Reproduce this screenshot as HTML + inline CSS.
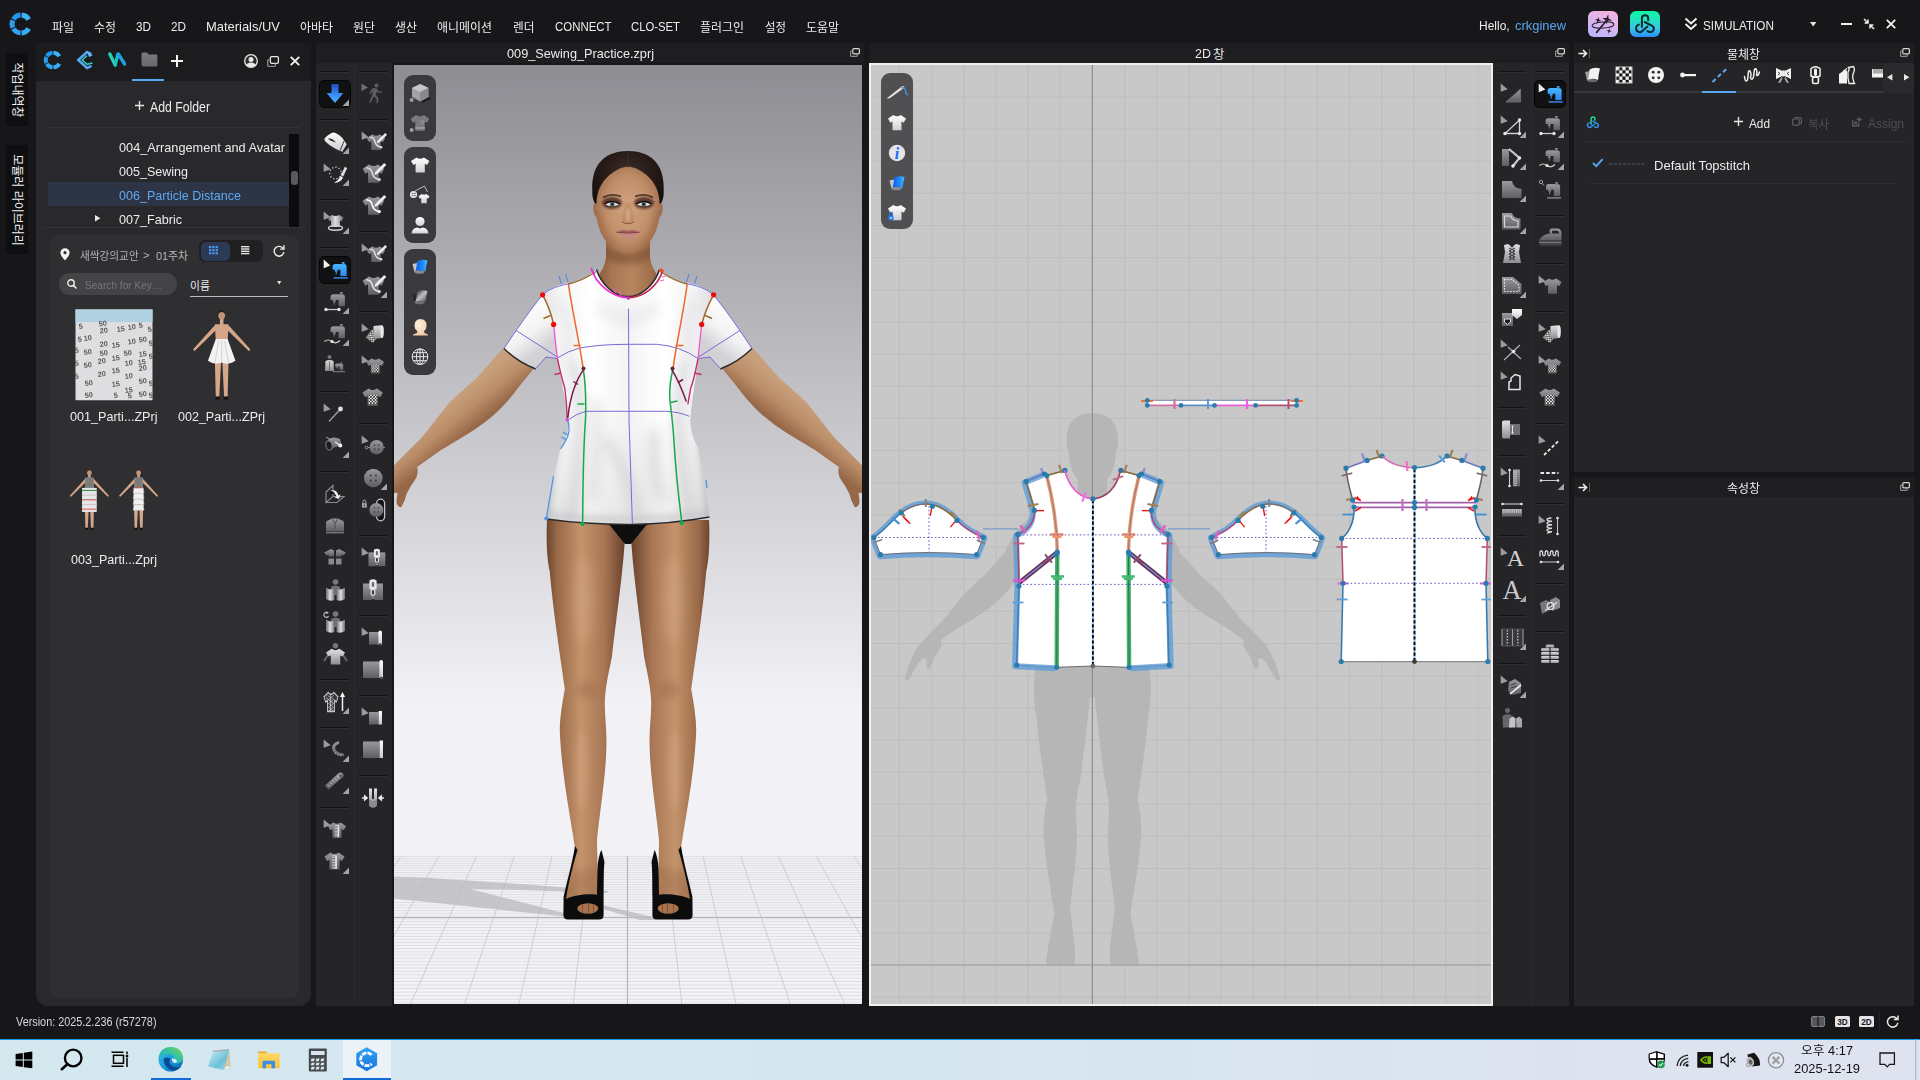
<!DOCTYPE html>
<html lang="ko">
<head>
<meta charset="utf-8">
<title>CLO - 009_Sewing_Practice.zprj</title>
<style>
*{box-sizing:border-box;margin:0;padding:0}
html,body{width:1920px;height:1080px;overflow:hidden;background:#17171a}
body{position:relative;font-family:"Liberation Sans","Noto Sans CJK KR",sans-serif;font-size:13px;color:#e4e4e6}
.abs{position:absolute}
.t{position:absolute;white-space:pre;line-height:1}
svg{position:absolute;overflow:visible}
.vtab{position:absolute;left:6px;width:22px;background:#0f0f11;border-radius:2px}
.vtab span{position:absolute;left:50%;top:50%;white-space:nowrap;transform:translate(-50%,-50%) rotate(90deg);font-size:12px;line-height:1;color:#f2f2f2}
.sep{position:absolute;height:1px;width:28px;background:#121214;box-shadow:0 1px 0 #303033}
</style>
</head>
<body>

<!-- sec_menu -->
<div class="abs" style="left:0px;top:0px;width:1920px;height:43px;background:#17171a;"></div><svg style="left:21.3px;top:24px" width="1" height="1"><path d="M7.75 -4.47A8.95 8.95 0 0 0 0.55 -8.93" fill="none" stroke="#3db4f8" stroke-width="4.90"/><path d="M-0.55 -8.93A8.95 8.95 0 0 0 -7.59 -4.74" fill="none" stroke="#2397ee" stroke-width="4.90"/><path d="M-8.11 -3.78A8.95 8.95 0 0 0 -8.11 3.78" fill="none" stroke="#2a9df0" stroke-width="4.90"/><path d="M-7.59 4.74A8.95 8.95 0 0 0 -0.55 8.93" fill="none" stroke="#2fa4f3" stroke-width="4.90"/><path d="M0.55 8.93A8.95 8.95 0 0 0 7.75 4.47" fill="none" stroke="#35aef6" stroke-width="4.90"/></svg><div class="t" style="left:52px;top:22px;font-size:12.4px;color:#ececee;transform:scaleX(0.9644);transform-origin:0 0;">파일</div><div class="t" style="left:94px;top:22px;font-size:12.4px;color:#ececee;transform:scaleX(0.9644);transform-origin:0 0;">수정</div><div class="t" style="left:136px;top:20px;font-size:13.5px;color:#ececee;transform:scaleX(0.8688);transform-origin:0 0;">3D</div><div class="t" style="left:171px;top:20px;font-size:13.5px;color:#ececee;transform:scaleX(0.8688);transform-origin:0 0;">2D</div><div class="t" style="left:206px;top:20px;font-size:13.5px;color:#ececee;transform:scaleX(0.9575);transform-origin:0 0;">Materials/UV</div><div class="t" style="left:300px;top:22px;font-size:12.4px;color:#ececee;transform:scaleX(0.9648);transform-origin:0 0;">아바타</div><div class="t" style="left:353px;top:22px;font-size:12.4px;color:#ececee;transform:scaleX(0.9644);transform-origin:0 0;">원단</div><div class="t" style="left:395px;top:22px;font-size:12.4px;color:#ececee;transform:scaleX(0.9644);transform-origin:0 0;">생산</div><div class="t" style="left:437px;top:22px;font-size:12.4px;color:#ececee;transform:scaleX(0.9649);transform-origin:0 0;">애니메이션</div><div class="t" style="left:512.5px;top:22px;font-size:12.4px;color:#ececee;transform:scaleX(0.9425);transform-origin:0 0;">렌더</div><div class="t" style="left:554.5px;top:20px;font-size:13.5px;color:#ececee;transform:scaleX(0.8464);transform-origin:0 0;">CONNECT</div><div class="t" style="left:631px;top:20px;font-size:13.5px;color:#ececee;transform:scaleX(0.8374);transform-origin:0 0;">CLO-SET</div><div class="t" style="left:700px;top:22px;font-size:12.4px;color:#ececee;transform:scaleX(0.9647);transform-origin:0 0;">플러그인</div><div class="t" style="left:764.5px;top:22px;font-size:12.4px;color:#ececee;transform:scaleX(0.9205);transform-origin:0 0;">설정</div><div class="t" style="left:806px;top:22px;font-size:12.4px;color:#ececee;transform:scaleX(0.9648);transform-origin:0 0;">도움말</div><div class="t" style="left:1479px;top:19px;font-size:13.5px;color:#ececee;transform:scaleX(0.8885);transform-origin:0 0;">Hello, </div><div class="t" style="left:1514.5px;top:19px;font-size:13.5px;color:#58a6f0;transform:scaleX(0.9572);transform-origin:0 0;">crkginew</div><div class="abs" style="left:1588px;top:10.6px;width:30.2px;height:26.4px;border-radius:6px;background:linear-gradient(200deg,#fdb2de 0%,#dcb5ec 45%,#b6b4fc 100%)"></div><svg style="left:0px;top:0px;" width="1920" height="1080" viewBox="0 0 1920 1080"><g fill="none" stroke="#2a2030" stroke-linecap="round"><ellipse cx="1603" cy="25" rx="11" ry="3.1" transform="rotate(-4 1603 25)" stroke-width="1"/><path d="M1596.600 32.400L1606.500 20.500" stroke-width="1.700"/></g><g fill="#2a2030"><path d="M1607.2 14.100000000000001L1608.34 18.16L1612.4 19.3L1608.34 20.44L1607.2 24.5L1606.06 20.44L1602.0 19.3L1606.06 18.16z" transform="rotate(12 1607.2 19.3)"/><path d="M1598 17.0L1598.80 19.40L1601.2 20.2L1598.80 21.00L1598 23.4L1597.20 21.00L1594.8 20.2L1597.20 19.40z" transform="rotate(12 1598 20.2)"/><path d="M1609 28.3L1609.67 30.32L1611.7 31L1609.67 31.68L1609 33.7L1608.33 31.68L1606.3 31L1608.33 30.32z" transform="rotate(12 1609 31)"/></g></svg><div class="abs" style="left:1630px;top:10.6px;width:29.8px;height:26.4px;border-radius:6px;background:linear-gradient(180deg,#0ff7a6 0%,#22e2c2 35%,#38c8e4 65%,#2a8cff 100%)"></div><svg style="left:0px;top:0px;" width="1920" height="1080" viewBox="0 0 1920 1080"><g fill="none" stroke="#0b2a32" stroke-width="2" stroke-linecap="round"><path d="M1641.900 27V18.400A3.150 3.150 0 0 1 1648.200 18.400V20.200"/><path d="M1644.700 22L1652.600 26.200A3.300 3.300 0 0 1 1650 32Q1648.500 32 1647.500 31"/><path d="M1638.800 24.600A3.700 3.700 0 1 0 1641 32L1647.500 26.600"/></g></svg><svg style="left:1684px;top:17px;" width="14" height="14" viewBox="0 0 14 14"><path d="M1.5 1.5L7 6.5L12.5 1.5M1.5 7L7 12L12.5 7" fill="none" stroke="#f4f4f4" stroke-width="1.9"/></svg><div class="t" style="left:1703px;top:19px;font-size:13.5px;color:#ececee;transform:scaleX(0.8710);transform-origin:0 0;">SIMULATION</div><svg style="left:1810px;top:22px;" width="7" height="5" viewBox="0 0 7 5"><path d="M0 0H6.4L3.2 4.6z" fill="#e0e0e0"/></svg><div class="abs" style="left:1841px;top:23px;width:11px;height:2px;background:#f0f0f0;"></div><svg style="left:1863px;top:18px;" width="12" height="12" viewBox="0 0 12 12"><g fill="none" stroke="#f0f0f0" stroke-width="1.5"><path d="M1 1L5 5M5 1.6V5H1.6M11 11L7 7M7 10.4V7H10.4"/></g></svg><svg style="left:1886px;top:19px;" width="10" height="10" viewBox="0 0 10 10"><path d="M0.8 0.8L9.2 9.2M9.2 0.8L0.8 9.2" fill="none" stroke="#f0f0f0" stroke-width="1.8"/></svg>
<!-- sec_lib -->
<div class="vtab" style="top:53px;height:73px"><span>작업내역창</span></div><div class="vtab" style="top:145px;height:109px"><span>모듈러 라이브러리</span></div><div class="abs" style="left:36px;top:43px;width:275px;height:963px;background:#29292c;border-radius:0 0 12px 12px"></div><div class="abs" style="left:36px;top:43px;width:275px;height:38px;background:#1c1c1f;"></div><svg style="left:53.3px;top:60px" width="1" height="1"><path d="M6.32 -3.65A7.30 7.30 0 0 0 0.45 -7.29" fill="none" stroke="#3db4f8" stroke-width="4.00"/><path d="M-0.45 -7.29A7.30 7.30 0 0 0 -6.19 -3.87" fill="none" stroke="#2397ee" stroke-width="4.00"/><path d="M-6.62 -3.09A7.30 7.30 0 0 0 -6.62 3.09" fill="none" stroke="#2a9df0" stroke-width="4.00"/><path d="M-6.19 3.87A7.30 7.30 0 0 0 -0.45 7.29" fill="none" stroke="#2fa4f3" stroke-width="4.00"/><path d="M0.45 7.29A7.30 7.30 0 0 0 6.32 3.65" fill="none" stroke="#35aef6" stroke-width="4.00"/></svg><svg style="left:76px;top:51px;" width="18" height="18" viewBox="0 0 18 18"><path d="M15.5 3.2L11 1L2.2 9L11 17L15.5 14.8" fill="none" stroke="#5aa9f2" stroke-width="2.4" stroke-linejoin="miter"/><path d="M11 4.6L6.2 9L11 13.4L16.5 12" fill="none" stroke="#35c7c2" stroke-width="1.6"/><path d="M11 1L16.8 4.4L13 6z" fill="#6db5f7"/></svg><svg style="left:108px;top:52px;" width="19" height="15" viewBox="0 0 19 15"><path d="M1.8 2L7.2 13" stroke="#24d3b4" stroke-width="3.4" stroke-linecap="round"/><path d="M7.2 13L9.8 2.5" stroke="#1fc0c0" stroke-width="3.2" stroke-linecap="round"/><path d="M10.2 2L16.6 12" stroke="#1aa0e8" stroke-width="3.4" stroke-linecap="round"/></svg><svg style="left:141px;top:52px;" width="17" height="15" viewBox="0 0 17 15"><defs><linearGradient id="fg" x1="0" y1="0" x2="0" y2="1"><stop offset="0" stop-color="#7c7c80"/><stop offset="1" stop-color="#68686c"/></linearGradient></defs><path d="M0.5 2.2Q0.5 0.6 2 0.6H6L7.6 2.4H15Q16.4 2.4 16.4 3.8V13Q16.4 14.6 15 14.6H2Q0.5 14.6 0.5 13z" fill="url(#fg)"/></svg><svg style="left:171px;top:55px;" width="12" height="12" viewBox="0 0 12 12"><path d="M6 0V12M0 6H12" stroke="#f4f4f4" stroke-width="2"/></svg><div class="abs" style="left:132px;top:78.5px;width:32px;height:2.5px;background:#58a9f2;"></div><svg style="left:244px;top:54px;" width="14" height="14" viewBox="0 0 14 14"><circle cx="7" cy="7" r="6.3" fill="#2a2a2d" stroke="#e8e8e8" stroke-width="1.3"/><circle cx="7" cy="5.6" r="2.5" fill="#e8e8e8"/><path d="M2.4 11.2Q3 8.4 7 8.4Q11 8.4 11.6 11.2Q9.6 13.2 7 13.2Q4.4 13.2 2.4 11.2z" fill="#e8e8e8"/></svg><svg style="left:267px;top:55.5px;" width="12" height="11" viewBox="0 0 12 11"><rect x="3.4" y="0.7" width="8" height="6.6" rx="1.2" fill="none" stroke="#e8e8e8" stroke-width="1.3"/><path d="M3.4 3.6H1.8Q0.7 3.6 0.7 4.8V9.2Q0.7 10.4 1.8 10.4H7.2Q8.4 10.4 8.4 9.2V7.4" fill="none" stroke="#8a8a8e" stroke-width="1.3"/></svg><svg style="left:290px;top:56px;" width="10" height="10" viewBox="0 0 10 10"><path d="M0.8 0.8L9.2 9.2M9.2 0.8L0.8 9.2" fill="none" stroke="#f0f0f0" stroke-width="1.9"/></svg><svg style="left:135px;top:101px;" width="9" height="9" viewBox="0 0 9 9"><path d="M4.5 0V9M0 4.5H9" stroke="#e8e8e8" stroke-width="1.4"/></svg><div class="t" style="left:150px;top:100px;font-size:14px;color:#ececee;transform:scaleX(0.8761);transform-origin:0 0;">Add Folder</div><div class="abs" style="left:48px;top:127px;width:251px;height:1px;background:#343437;"></div><div class="abs" style="left:48px;top:182px;width:241px;height:24px;background:#2c3446;"></div><div class="t" style="left:118.5px;top:141px;font-size:13.5px;color:#ececee;transform:scaleX(0.9424);transform-origin:0 0;">004_Arrangement and Avatar</div><div class="t" style="left:118.5px;top:165px;font-size:13.5px;color:#ececee;transform:scaleX(0.9285);transform-origin:0 0;">005_Sewing</div><div class="t" style="left:118.5px;top:189px;font-size:13.5px;color:#5ea8f0;transform:scaleX(0.9290);transform-origin:0 0;">006_Particle Distance</div><div class="t" style="left:118.5px;top:213px;font-size:13.5px;color:#ececee;transform:scaleX(0.9327);transform-origin:0 0;">007_Fabric</div><svg style="left:95px;top:215px;" width="6" height="7" viewBox="0 0 6 7"><path d="M0 0L5.4 3.3L0 6.6z" fill="#e8e8e8"/></svg><div class="abs" style="left:289px;top:134px;width:10px;height:93px;background:#0c0c0e;"></div><div class="abs" style="left:291px;top:170.5px;width:6.6px;height:14px;background:#5a5a5e;border-radius:3px"></div><div class="abs" style="left:42px;top:227px;width:263px;height:1px;background:#333336;"></div><div class="abs" style="left:48.5px;top:234.5px;width:250.5px;height:763.5px;background:#2f2f32;border-radius:9px"></div><svg style="left:60px;top:248px;" width="10" height="12.5" viewBox="0 0 10 12.5"><path d="M5 0.2A4.6 4.6 0 0 1 9.6 4.8C9.6 8 5 12.3 5 12.3C5 12.3 0.4 8 0.4 4.8A4.6 4.6 0 0 1 5 0.2z" fill="#f2f2f2"/><circle cx="5" cy="4.7" r="1.6" fill="#2f2f32"/></svg><div class="t" style="left:79.6px;top:251px;font-size:10.8px;color:#b4b4b8;transform:scaleX(0.9847);transform-origin:0 0;">새싹강의교안</div><div class="t" style="left:143px;top:250px;font-size:11px;color:#b4b4b8;">&gt;</div><div class="t" style="left:156px;top:251px;font-size:10.8px;color:#b4b4b8;">01주차</div><div class="abs" style="left:199px;top:240px;width:64px;height:22px;background:#202023;border-radius:6px"></div><div class="abs" style="left:200.5px;top:241.5px;width:29px;height:19px;background:#2c3a56;border-radius:5px"></div><svg style="left:209px;top:246px;" width="9" height="9" viewBox="0 0 9 9"><rect x="0.0" y="0.0" width="2.3" height="2.1" fill="#4f9af0"/><rect x="0.0" y="3.1" width="2.3" height="2.1" fill="#4f9af0"/><rect x="0.0" y="6.2" width="2.3" height="2.1" fill="#4f9af0"/><rect x="3.3" y="0.0" width="2.3" height="2.1" fill="#4f9af0"/><rect x="3.3" y="3.1" width="2.3" height="2.1" fill="#4f9af0"/><rect x="3.3" y="6.2" width="2.3" height="2.1" fill="#4f9af0"/><rect x="6.6" y="0.0" width="2.3" height="2.1" fill="#4f9af0"/><rect x="6.6" y="3.1" width="2.3" height="2.1" fill="#4f9af0"/><rect x="6.6" y="6.2" width="2.3" height="2.1" fill="#4f9af0"/></svg><svg style="left:241px;top:246px;" width="9" height="9" viewBox="0 0 9 9"><rect x="0" y="0.0" width="8.4" height="1.4" fill="#e6e6e6"/><rect x="0" y="2.3" width="8.4" height="1.4" fill="#e6e6e6"/><rect x="0" y="4.6" width="8.4" height="1.4" fill="#e6e6e6"/><rect x="0" y="6.8999999999999995" width="8.4" height="1.4" fill="#e6e6e6"/></svg><svg style="left:273px;top:245px;" width="12" height="12" viewBox="0 0 12 12"><path d="M10.2 3.6A4.9 4.9 0 1 0 10.9 7.2" fill="none" stroke="#f0f0f0" stroke-width="1.4"/><path d="M7.2 4.1H11V0.3" fill="none" stroke="#f0f0f0" stroke-width="1.4"/></svg><div class="abs" style="left:59px;top:273px;width:118px;height:22px;background:#444447;border-radius:11px"></div><svg style="left:67px;top:279px;" width="10" height="10" viewBox="0 0 10 10"><circle cx="4" cy="4" r="3.2" fill="none" stroke="#f0f0f0" stroke-width="1.4"/><path d="M6.4 6.4L9 9" stroke="#f0f0f0" stroke-width="1.6" stroke-linecap="round"/></svg><div class="t" style="left:84.6px;top:280px;font-size:11px;color:#77777b;transform:scaleX(0.9192);transform-origin:0 0;">Search for Key…</div><div class="t" style="left:190px;top:281px;font-size:10.8px;color:#ececee;">이름</div><svg style="left:277px;top:281.3px;" width="5" height="4" viewBox="0 0 5 4"><path d="M0 0H4.4L2.2 3.4z" fill="#e0e0e0"/></svg><div class="abs" style="left:190px;top:296px;width:98px;height:1px;background:#bcbcc0;"></div><svg style="left:0;top:0" width="1920" height="1080"><defs><filter id="ntb"><feGaussianBlur stdDeviation="0.35"/></filter><clipPath id="nt"><rect x="75.3" y="309.3" width="77.4" height="91.2"/></clipPath></defs><g clip-path="url(#nt)"><rect x="75.3" y="309.3" width="77.4" height="91.2" fill="#dedee0"/><rect x="75.3" y="309.3" width="77.4" height="12.8" fill="#b0d2e0"/><g font-family="'Liberation Sans',sans-serif" font-size="7.4" font-weight="700" fill="#3c3c3e" opacity="0.82" filter="url(#ntb)"><text x="79" y="329" transform="rotate(-7 79 329)">5</text><text x="99" y="326.5" transform="rotate(-7 99 326.5)">50</text><text x="100" y="333.5" transform="rotate(-7 100 333.5)">20</text><text x="117" y="332" transform="rotate(-7 117 332)">15</text><text x="128" y="330" transform="rotate(-7 128 330)">10</text><text x="139" y="328" transform="rotate(-7 139 328)">5</text><text x="148" y="332" transform="rotate(-7 148 332)">5</text><text x="78" y="342" transform="rotate(-7 78 342)">5</text><text x="84" y="341" transform="rotate(-7 84 341)">10</text><text x="100" y="347" transform="rotate(-7 100 347)">20</text><text x="112" y="348" transform="rotate(-7 112 348)">15</text><text x="128" y="344.5" transform="rotate(-7 128 344.5)">10</text><text x="139" y="342.5" transform="rotate(-7 139 342.5)">50</text><text x="149" y="346" transform="rotate(-7 149 346)">5</text><text x="75" y="353" transform="rotate(-7 75 353)">5</text><text x="84" y="355" transform="rotate(-7 84 355)">50</text><text x="100" y="356" transform="rotate(-7 100 356)">50</text><text x="112" y="361" transform="rotate(-7 112 361)">15</text><text x="124" y="356" transform="rotate(-7 124 356)">50</text><text x="139" y="357" transform="rotate(-7 139 357)">15</text><text x="149" y="359" transform="rotate(-7 149 359)">5</text><text x="75" y="366" transform="rotate(-7 75 366)">5</text><text x="84" y="368" transform="rotate(-7 84 368)">50</text><text x="98" y="364" transform="rotate(-7 98 364)">20</text><text x="125" y="366" transform="rotate(-7 125 366)">10</text><text x="138" y="365" transform="rotate(-7 138 365)">15</text><text x="139" y="371" transform="rotate(-7 139 371)">20</text><text x="98" y="377" transform="rotate(-7 98 377)">20</text><text x="112" y="373.5" transform="rotate(-7 112 373.5)">15</text><text x="125" y="379" transform="rotate(-7 125 379)">10</text><text x="75" y="379" transform="rotate(-7 75 379)">5</text><text x="85" y="386" transform="rotate(-7 85 386)">50</text><text x="112" y="387" transform="rotate(-7 112 387)">15</text><text x="139" y="384" transform="rotate(-7 139 384)">50</text><text x="149" y="386" transform="rotate(-7 149 386)">5</text><text x="85" y="398" transform="rotate(-7 85 398)">50</text><text x="114" y="398" transform="rotate(-7 114 398)">5</text><text x="125" y="393" transform="rotate(-7 125 393)">15</text><text x="128" y="398.5" transform="rotate(-7 128 398.5)">5</text><text x="139" y="397" transform="rotate(-7 139 397)">50</text><text x="149" y="398" transform="rotate(-7 149 398)">5</text></g></g></svg><svg style="left:0px;top:0px;" width="1920" height="1080" viewBox="0 0 1920 1080"><g transform="translate(221.7 309.5) scale(0.9836956521739131)"><path d="M-7 16L-29 40.5L-27.8 42.5L-5.5 20.5z" fill="#d6a688"/><path d="M7 16L29 40.5L27.8 42.5L5.5 20.5z" fill="#d6a688"/><path d="M-7 50L-6 90L-2.5 90L-0.5 50z" fill="#d6a688"/><path d="M7 50L6 90L2.5 90L0.5 50z" fill="#d6a688"/><path d="M-6.5 88.5h4.5v3h-4.5zM2 88.5h4.5v3H2z" fill="#111"/><path d="M-7 15L7 15L6 32L7 50L-7 50L-6 32z" fill="#d6a688"/><rect x="-1.8" y="9" width="3.6" height="7" fill="#d6a688"/><ellipse cx="0" cy="5.500" rx="3.500" ry="5" fill="#c39478"/><path d="M-3.700 5.500Q-4 0.300 0 0.300Q4 0.300 3.700 5.500Q3 2.800 0 2.600Q-3 2.800 -3.700 5.500z" fill="#2a1d18"/><path d="M-6 30L6 30L14 52Q7 57 0 54Q-7 57 -14 52z" fill="#f2f2f2"/><path d="M-3 32L-7 54M3 32L7 54M0 32V54" stroke="#d2d2d2" stroke-width="1" fill="none"/></g><g transform="translate(89.4 468.5) scale(0.6684782608695652)"><path d="M-7 16L-29 40.5L-27.8 42.5L-5.5 20.5z" fill="#d6a688"/><path d="M7 16L29 40.5L27.8 42.5L5.5 20.5z" fill="#d6a688"/><path d="M-7 50L-6 90L-2.5 90L-0.5 50z" fill="#d6a688"/><path d="M7 50L6 90L2.5 90L0.5 50z" fill="#d6a688"/><path d="M-6.5 88.5h4.5v3h-4.5zM2 88.5h4.5v3H2z" fill="#111"/><path d="M-7 15L7 15L6 32L7 50L-7 50L-6 32z" fill="#d6a688"/><rect x="-1.8" y="9" width="3.6" height="7" fill="#d6a688"/><ellipse cx="0" cy="5.500" rx="3.500" ry="5" fill="#c39478"/><path d="M-3.700 5.500Q-4 0.300 0 0.300Q4 0.300 3.700 5.500Q3 2.800 0 2.600Q-3 2.800 -3.700 5.500z" fill="#2a1d18"/><path d="M-6 13L6 13L6.5 30L-6.5 30z" fill="#7b7b7b"/><rect x="-11" y="29" width="22" height="36" fill="#e6e6e6"/><rect x="-11" y="32" width="22" height="1.6" fill="#3a8a4a"/><rect x="-11" y="39" width="22" height="1.6" fill="#c9c9c9"/><rect x="-11" y="46" width="22" height="1.6" fill="#c05a5a"/><rect x="-11" y="53" width="22" height="1.6" fill="#c9c9c9"/><rect x="-11" y="60" width="22" height="1.6" fill="#e05a5a"/></g><g transform="translate(138.6 468.5) scale(0.6684782608695652)"><path d="M-7 16L-29 40.5L-27.8 42.5L-5.5 20.5z" fill="#d6a688"/><path d="M7 16L29 40.5L27.8 42.5L5.5 20.5z" fill="#d6a688"/><path d="M-7 50L-6 90L-2.5 90L-0.5 50z" fill="#d6a688"/><path d="M7 50L6 90L2.5 90L0.5 50z" fill="#d6a688"/><path d="M-6.5 88.5h4.5v3h-4.5zM2 88.5h4.5v3H2z" fill="#111"/><path d="M-7 15L7 15L6 32L7 50L-7 50L-6 32z" fill="#d6a688"/><rect x="-1.8" y="9" width="3.6" height="7" fill="#d6a688"/><ellipse cx="0" cy="5.500" rx="3.500" ry="5" fill="#c39478"/><path d="M-3.700 5.500Q-4 0.300 0 0.300Q4 0.300 3.700 5.500Q3 2.800 0 2.600Q-3 2.800 -3.700 5.500z" fill="#2a1d18"/><path d="M-6 13L6 13L6.5 30L-6.5 30z" fill="#7b7b7b"/><path d="M-7 29.0L7 29.0L8 37.0L-8 37.0z" fill="#f0f0f0" stroke="#c8c8c8" stroke-width="0.8"/><path d="M-7 37.5L7 37.5L8 45.5L-8 45.5z" fill="#f0f0f0" stroke="#c8c8c8" stroke-width="0.8"/><path d="M-7 46.0L7 46.0L8 54.0L-8 54.0z" fill="#f0f0f0" stroke="#c8c8c8" stroke-width="0.8"/><path d="M-7 54.5L7 54.5L8 62.5L-8 62.5z" fill="#f0f0f0" stroke="#c8c8c8" stroke-width="0.8"/><rect x="-6" y="28" width="12" height="1.5" fill="#c05050"/></g></svg><div class="t" style="left:70px;top:410px;font-size:13.5px;color:#ececee;transform:scaleX(0.9329);transform-origin:0 0;">001_Parti...ZPrj</div><div class="t" style="left:178px;top:410px;font-size:13.5px;color:#ececee;transform:scaleX(0.9275);transform-origin:0 0;">002_Parti...ZPrj</div><div class="t" style="left:71px;top:553px;font-size:13.5px;color:#ececee;transform:scaleX(0.9318);transform-origin:0 0;">003_Parti...Zprj</div>
<!-- sec_3d -->
<div class="abs" style="left:316px;top:43px;width:548px;height:20px;background:#1e1e21;"></div><div class="t" style="left:507px;top:47px;font-size:13.5px;color:#ececee;transform:scaleX(0.9417);transform-origin:0 0;">009_Sewing_Practice.zprj</div><svg style="left:850px;top:48px;" width="10" height="9" viewBox="0 0 10 9"><rect x="2.8" y="0.6" width="6.6" height="5.2" rx="1" fill="none" stroke="#d8d8d8" stroke-width="1.2"/><path d="M2.8 2.8H1.6Q0.6 2.8 0.6 3.8V7.4Q0.6 8.4 1.6 8.4H6.2Q7.2 8.4 7.2 7.4V5.8" fill="none" stroke="#8c8c90" stroke-width="1.2"/></svg><div class="abs" style="left:316px;top:63px;width:38px;height:943px;background:#252528;"></div><div class="abs" style="left:354px;top:63px;width:38px;height:943px;background:#252528;border-left:1px solid #2b2b2e"></div><div class="abs" style="left:392px;top:63px;width:472px;height:943px;background:#17171a;"></div><div class="abs" style="left:394px;top:65px;width:468px;height:939px;background:linear-gradient(to bottom,#8d8d93 0,#f2f2f6 68%,#f3f3f7 100%)"></div><svg style="left:0px;top:0px;" width="1920" height="1080" viewBox="0 0 1920 1080"><defs><clipPath id="vp3"><rect x="394" y="65" width="468" height="939"/></clipPath></defs><g clip-path="url(#vp3)"><rect x="394" y="856.6" width="468" height="147.39999999999998" fill="#f3f3f7"/><path d="M394 856.6H862M394 858.8H862M394 861.0H862M394 863.3H862M394 865.5H862M394 867.8H862M394 870.1H862M394 872.5H862M394 874.8H862M394 877.2H862M394 879.6H862M394 882.1H862M394 884.5H862M394 887.0H862M394 889.5H862M394 892.1H862M394 894.6H862M394 897.2H862M394 899.8H862M394 902.5H862M394 905.1H862M394 907.8H862M394 910.6H862M394 913.3H862M394 916.1H862M394 918.9H862M394 921.7H862M394 924.6H862M394 927.5H862M394 930.4H862M394 933.4H862M394 936.4H862M394 939.4H862M394 942.4H862M394 945.5H862M394 948.6H862M394 951.8H862M394 954.9H862M394 958.1H862M394 961.4H862M394 964.7H862M394 968.0H862M394 971.3H862M394 974.7H862M394 978.1H862M394 981.5H862M394 985.0H862M394 988.5H862M394 992.1H862M394 995.6H862M394 999.3H862M394 1002.9H862" stroke="#dedee2" stroke-width="1" fill="none"/><path d="M98.3 856.6L-132.4 1004M136.1 856.6L-78.1 1004M173.9 856.6L-23.8 1004M211.7 856.6L30.4 1004M249.5 856.6L84.7 1004M287.3 856.6L139.0 1004M325.1 856.6L193.3 1004M362.9 856.6L247.5 1004M400.7 856.6L301.8 1004M438.5 856.6L356.1 1004M476.3 856.6L410.4 1004M514.1 856.6L464.7 1004M551.9 856.6L518.9 1004M589.7 856.6L573.2 1004M665.3 856.6L681.8 1004M703.1 856.6L736.1 1004M740.9 856.6L790.3 1004M778.7 856.6L844.6 1004M816.5 856.6L898.9 1004M854.3 856.6L953.2 1004M892.1 856.6L1007.5 1004M929.9 856.6L1061.7 1004M967.7 856.6L1116.0 1004M1005.5 856.6L1170.3 1004M1043.3 856.6L1224.6 1004M1081.1 856.6L1278.8 1004M1118.9 856.6L1333.1 1004M1156.7 856.6L1387.4 1004" stroke="#cdcdd2" stroke-width="1" fill="none"/><path d="M627.5 856.6V1004M394 917.5H862" stroke="#b4b4b8" stroke-width="1.2" fill="none"/><path d="M394 876.5L430 878L520 884L609 891L607 893L520 890L470 889L564 913L566 916.5L530 913L394 898.5z" fill="#b9b9bd" opacity="0.75"/><path d="M604 905.5L655 917.5L657 920L640 920L603 909z" fill="#b9b9bd" opacity="0.75"/><defs><linearGradient id="legL" x1="0" y1="0" x2="1" y2="0"><stop offset="0" stop-color="#6e452e"/><stop offset="0.14" stop-color="#9a6a48"/><stop offset="0.44" stop-color="#c3936c"/><stop offset="0.74" stop-color="#a87654"/><stop offset="1" stop-color="#6a422c"/></linearGradient>
<linearGradient id="armL" gradientUnits="userSpaceOnUse" x1="448" y1="404" x2="470" y2="431"><stop offset="0" stop-color="#c89f7b"/><stop offset="0.5" stop-color="#bb8d69"/><stop offset="1" stop-color="#966848"/></linearGradient>
<linearGradient id="neck" x1="0" y1="0" x2="1" y2="0"><stop offset="0" stop-color="#74482e"/><stop offset="0.3" stop-color="#a87652"/><stop offset="0.55" stop-color="#b7855f"/><stop offset="0.8" stop-color="#a06e4b"/><stop offset="1" stop-color="#70442c"/></linearGradient>
<radialGradient id="face" cx="0.5" cy="0.52" r="0.62"><stop offset="0" stop-color="#d2a480"/><stop offset="0.55" stop-color="#c08f6a"/><stop offset="0.85" stop-color="#a06d4c"/><stop offset="1" stop-color="#83553a"/></radialGradient>
<radialGradient id="hair" cx="0.5" cy="0.35" r="0.7"><stop offset="0" stop-color="#3a2a25"/><stop offset="0.6" stop-color="#231815"/><stop offset="1" stop-color="#15100e"/></radialGradient>
<linearGradient id="shirt" x1="0" y1="0" x2="1" y2="0"><stop offset="0" stop-color="#e3e3e5"/><stop offset="0.1" stop-color="#f6f6f7"/><stop offset="0.28" stop-color="#ffffff"/><stop offset="0.5" stop-color="#f4f4f5"/><stop offset="0.72" stop-color="#ffffff"/><stop offset="0.9" stop-color="#f2f2f3"/><stop offset="1" stop-color="#dcdcdf"/></linearGradient>
<linearGradient id="shirtV" x1="0" y1="0" x2="0" y2="1"><stop offset="0" stop-color="#000" stop-opacity="0"/><stop offset="0.55" stop-color="#000" stop-opacity="0"/><stop offset="1" stop-color="#000" stop-opacity="0.07"/></linearGradient>
<linearGradient id="slv" gradientUnits="userSpaceOnUse" x1="520" y1="305" x2="548" y2="345"><stop offset="0" stop-color="#ffffff"/><stop offset="0.6" stop-color="#f3f3f4"/><stop offset="1" stop-color="#d2d2d6"/></linearGradient>
<filter id="bl1" filterUnits="userSpaceOnUse" x="380" y="60" width="500" height="960"><feGaussianBlur stdDeviation="1.2"/></filter><filter id="bl3" filterUnits="userSpaceOnUse" x="380" y="60" width="500" height="960"><feGaussianBlur stdDeviation="3"/></filter><filter id="bl6" filterUnits="userSpaceOnUse" x="380" y="60" width="500" height="960"><feGaussianBlur stdDeviation="6"/></filter></defs><g><path d="M506 345 L477.3 377.2 Q463 390 449.6 402.2 L421.8 437.4 Q410 449 399.6 459.6 L386 474 Q376 490 370 508 L366.5 521 Q368 525 371.5 523.5 L380 508 Q386 498 391 492.5 L397.7 493 Q396 500 396.8 504 Q399 508.5 401.4 506.9 Q405 501 407 493 Q411 485 416.2 478 Q418.5 472 417.1 467 L440.3 450.4 L468 433.7 Q484 424 497.7 411.5 Q511 398 519.9 385.6 L535 367 z" fill="url(#armL)"/></g><g transform="translate(1256 0) scale(-1 1)"><path d="M506 345 L477.3 377.2 Q463 390 449.6 402.2 L421.8 437.4 Q410 449 399.6 459.6 L386 474 Q376 490 370 508 L366.5 521 Q368 525 371.5 523.5 L380 508 Q386 498 391 492.5 L397.7 493 Q396 500 396.8 504 Q399 508.5 401.4 506.9 Q405 501 407 493 Q411 485 416.2 478 Q418.5 472 417.1 467 L440.3 450.4 L468 433.7 Q484 424 497.7 411.5 Q511 398 519.9 385.6 L535 367 z" fill="url(#armL)"/></g><g><path d="M547 520 C546 540 547 560 549.7 571 C553 610 560 655 564.8 689 C562 705 559 722 560 736 C562 775 570 815 575 848 C572 866 568 884 565 900 L599 897 L597.5 868 L597 840 C600 810 606 775 606.4 745.7 C607 728 604 712 605 698 C606 682 610 668 612 656 C616 620 622 580 624.5 545 L624 520 z" fill="url(#legL)"/><ellipse cx="587" cy="690" rx="11" ry="9" fill="#8f5c3c" opacity="0.28" filter="url(#bl3)"/><ellipse cx="584" cy="600" rx="9" ry="45" fill="#e0b48e" opacity="0.35" filter="url(#bl6)"/><ellipse cx="582" cy="770" rx="6" ry="40" fill="#e0b48e" opacity="0.3" filter="url(#bl3)"/><path d="M571 872 L598 868 L598.5 896 L566 899z" fill="#8a5a3c" opacity="0.25" filter="url(#bl3)"/><path d="M575 846 C572 865 566 885 563.6 897 L563.4 915 Q563.6 919.5 568 919.5 L599 919.5 Q603.6 919.5 603.6 915 L603.6 897 C603.8 885 603.5 870 604.5 862 L601.5 850 C600 852 598 860 597.5 868 L597 894.8 C588 893.5 574 895 566 899 C569 880 574 862 577.5 850 z" fill="#0c0c0c"/><ellipse cx="587.8" cy="908.5" rx="10.5" ry="5.2" fill="#a8724c"/><path d="M582.5 904.5v8.5M588.5 904v9M593.5 905v7.5" stroke="#7d4f33" stroke-width="0.9"/></g><g transform="translate(1256 0) scale(-1 1)"><path d="M547 520 C546 540 547 560 549.7 571 C553 610 560 655 564.8 689 C562 705 559 722 560 736 C562 775 570 815 575 848 C572 866 568 884 565 900 L599 897 L597.5 868 L597 840 C600 810 606 775 606.4 745.7 C607 728 604 712 605 698 C606 682 610 668 612 656 C616 620 622 580 624.5 545 L624 520 z" fill="url(#legL)"/><ellipse cx="587" cy="690" rx="11" ry="9" fill="#8f5c3c" opacity="0.28" filter="url(#bl3)"/><ellipse cx="584" cy="600" rx="9" ry="45" fill="#e0b48e" opacity="0.35" filter="url(#bl6)"/><ellipse cx="582" cy="770" rx="6" ry="40" fill="#e0b48e" opacity="0.3" filter="url(#bl3)"/><path d="M571 872 L598 868 L598.5 896 L566 899z" fill="#8a5a3c" opacity="0.25" filter="url(#bl3)"/><path d="M575 846 C572 865 566 885 563.6 897 L563.4 915 Q563.6 919.5 568 919.5 L599 919.5 Q603.6 919.5 603.6 915 L603.6 897 C603.8 885 603.5 870 604.5 862 L601.5 850 C600 852 598 860 597.5 868 L597 894.8 C588 893.5 574 895 566 899 C569 880 574 862 577.5 850 z" fill="#0c0c0c"/><ellipse cx="587.8" cy="908.5" rx="10.5" ry="5.2" fill="#a8724c"/><path d="M582.5 904.5v8.5M588.5 904v9M593.5 905v7.5" stroke="#7d4f33" stroke-width="0.9"/></g><path d="M600 518 L656 518 L645.5 526 Q636 538 631 544 L625 544 Q620 538 610.5 526z" fill="#0e0e0e"/><clipPath id="nclip"><path d="M606 240 L606 258 Q604 270 596 278 L588 285 L628 306 L668 285 L660 278 Q652 270 650 258 L650 240z"/></clipPath><path d="M606 240 L606 258 Q604 270 596 278 L588 285 L628 306 L668 285 L660 278 Q652 270 650 258 L650 240z" fill="url(#neck)"/><g clip-path="url(#nclip)"><path d="M600 243 Q628 262 656 243 L656 256 Q628 272 600 256z" fill="#6e4229" opacity="0.5" filter="url(#bl3)"/></g><clipPath id="hclip"><path d="M595 200 C595 215 598 228 603 237 C608 245 616 251 628 253.5 C640 251 648 245 653 237 C658 228 661 215 661 200 C661 172 645 160 628 160 C611 160 595 172 595 200z"/></clipPath><path d="M595 200 C595 215 598 228 603 237 C608 245 616 251 628 253.5 C640 251 648 245 653 237 C658 228 661 215 661 200 C661 172 645 160 628 160 C611 160 595 172 595 200z" fill="url(#face)"/><path d="M595 203q-2.5 2-1.5 8q1 5 3 7zM661 203q2.5 2 1.5 8q-1 5-3 7z" fill="#a06c4a"/><g clip-path="url(#hclip)"><ellipse cx="612" cy="203" rx="10" ry="6" fill="#3a1f1a" opacity="0.75" filter="url(#bl1)"/><ellipse cx="644" cy="203" rx="10" ry="6" fill="#3a1f1a" opacity="0.75" filter="url(#bl1)"/><path d="M605.5 204.5Q612 200.5 619 204.5Q612 207.5 605.5 204.5z" fill="#e8e6e2"/><path d="M637 204.5Q644 200.5 650.5 204.5Q644 207.5 637 204.5z" fill="#e8e6e2"/><circle cx="612.3" cy="204.3" r="2.3" fill="#3f6470"/><circle cx="643.7" cy="204.3" r="2.3" fill="#3f6470"/><circle cx="612.3" cy="204.3" r="1" fill="#111"/><circle cx="643.7" cy="204.3" r="1" fill="#111"/><path d="M604.5 203.8Q612 199 620 204" stroke="#1c120e" stroke-width="1.3" fill="none"/><path d="M636 204Q644 199 651.5 203.8" stroke="#1c120e" stroke-width="1.3" fill="none"/><path d="M603 197.5Q611 193 621 196.5" stroke="#3a241b" stroke-width="1.8" fill="none" opacity="0.85"/><path d="M635 196.5Q645 193 653 197.5" stroke="#3a241b" stroke-width="1.8" fill="none" opacity="0.85"/><path d="M625 203 Q623.5 214 621.5 219.5 Q622.5 223 628 223.5 Q633.5 223 634.5 219.5 Q632.5 214 631 203" fill="#b07b56" opacity="0.45" filter="url(#bl1)"/><path d="M622 221.5Q624.5 224 628 223.6Q631.5 224 634 221.5" stroke="#7a4a32" stroke-width="1" fill="none" opacity="0.8"/><ellipse cx="628" cy="215" rx="2.2" ry="7" fill="#e4b892" opacity="0.6" filter="url(#bl1)"/><path d="M616.5 232.3Q622 229.3 626 230.3Q628 231 630 230.3Q634 229.3 639.5 232.3Q634 233.2 628 233.2Q622 233.2 616.5 232.3z" fill="#a86060"/><path d="M616.5 232.3Q628 233.6 639.5 232.3Q634 238.2 628 238.2Q622 238.2 616.5 232.3z" fill="#c98888"/><path d="M616.5 232.3Q628 234 639.5 232.3" stroke="#6e3434" stroke-width="0.8" fill="none"/><path d="M598 212Q600 232 612 246" stroke="#8a5a3c" stroke-width="5" fill="none" opacity="0.35" filter="url(#bl3)"/><path d="M658 212Q656 232 644 246" stroke="#8a5a3c" stroke-width="5" fill="none" opacity="0.35" filter="url(#bl3)"/></g><path d="M592.3 190 C591.5 170 600 151 628 151 C656 151 664.500 170 663.700 190 C664 196 663 200 661 203.500 L659.500 203.500 C659.500 192 655 182 646 174.500 C639 169 633 166.700 628 166.700 C623 166.700 617 169 610 174.500 C601 182 596.500 192 596.500 203.500 L595 203.500 C593 200 592 196 592.300 190z" fill="url(#hair)"/><path d="M628 151.5V168" stroke="#4a3a34" stroke-width="0.8" opacity="0.8"/><g><path d="M568 283 C558 284.5 549 289 542.6 294.8 C530 310 515 332 504 348.5 C512 356 524 364 535.8 368.5 L546 357 L557.4 358.5 L575 330z" fill="url(#slv)"/><path d="M504 348.5 C512 356.5 524 364.5 535.8 369" stroke="#2a2a2c" stroke-width="1.4" fill="none"/></g><g transform="translate(1256 0) scale(-1 1)"><path d="M568 283 C558 284.5 549 289 542.6 294.8 C530 310 515 332 504 348.5 C512 356 524 364 535.8 368.5 L546 357 L557.4 358.5 L575 330z" fill="url(#slv)"/><path d="M504 348.5 C512 356.5 524 364.5 535.8 369" stroke="#2a2a2c" stroke-width="1.4" fill="none"/></g><path d="M596.5 269.6 C590 275 580 281 568 284 C556 286 548 290 542.6 294.8 C548 305 552 316 553.6 324.4 C555 337 556 349 557.4 358.5 C561 380 566 400 567.8 418 C570 430 566 440 560.4 449 C554 472 549 498 546 519 C575 523 600 524.5 630 524.4 C660 524 688 521 709.4 517 C707 495 702 470 698.5 449 C693 438 689 428 690.7 415 C692 398 696 378 698.6 358.5 C700 349 701 337 702.4 324.4 C704 316 708 305 713.4 294.8 C708 290 700 286 688 284 C676 281 666 275 659.5 269.6 C655 284 642 297.8 628 297.8 C614 297.8 601 284 596.5 269.6z" fill="url(#shirt)"/><path d="M596.5 269.6 C590 275 580 281 568 284 C556 286 548 290 542.6 294.8 C548 305 552 316 553.6 324.4 C555 337 556 349 557.4 358.5 C561 380 566 400 567.8 418 C570 430 566 440 560.4 449 C554 472 549 498 546 519 C575 523 600 524.5 630 524.4 C660 524 688 521 709.4 517 C707 495 702 470 698.5 449 C693 438 689 428 690.7 415 C692 398 696 378 698.6 358.5 C700 349 701 337 702.4 324.4 C704 316 708 305 713.4 294.8 C708 290 700 286 688 284 C676 281 666 275 659.5 269.6 C655 284 642 297.8 628 297.8 C614 297.8 601 284 596.5 269.6z" fill="url(#shirtV)"/><clipPath id="bclip"><path d="M596.5 269.6 C590 275 580 281 568 284 C556 286 548 290 542.6 294.8 C548 305 552 316 553.6 324.4 C555 337 556 349 557.4 358.5 C561 380 566 400 567.8 418 C570 430 566 440 560.4 449 C554 472 549 498 546 519 C575 523 600 524.5 630 524.4 C660 524 688 521 709.4 517 C707 495 702 470 698.5 449 C693 438 689 428 690.7 415 C692 398 696 378 698.6 358.5 C700 349 701 337 702.4 324.4 C704 316 708 305 713.4 294.8 C708 290 700 286 688 284 C676 281 666 275 659.5 269.6 C655 284 642 297.8 628 297.8 C614 297.8 601 284 596.5 269.6z"/></clipPath><g clip-path="url(#bclip)"><path d="M572 360Q590 420 570 520" stroke="#bcbcc2" stroke-width="9" fill="none" opacity="0.55" filter="url(#bl6)"/><path d="M686 360Q668 420 692 520" stroke="#bcbcc2" stroke-width="9" fill="none" opacity="0.5" filter="url(#bl6)"/><path d="M606 440Q628 470 640 520" stroke="#c6c6cb" stroke-width="9" fill="none" opacity="0.55" filter="url(#bl6)"/><path d="M598 306Q628 332 658 306" stroke="#cfcfd4" stroke-width="7" fill="none" opacity="0.45" filter="url(#bl6)"/><path d="M556 440Q548 480 545 522" stroke="#b0b0b6" stroke-width="8" fill="none" opacity="0.6" filter="url(#bl3)"/><path d="M702 440Q708 480 711 520" stroke="#b0b0b6" stroke-width="8" fill="none" opacity="0.6" filter="url(#bl3)"/><path d="M546 516Q628 524 710 514" stroke="#b8b8be" stroke-width="7" fill="none" opacity="0.5" filter="url(#bl3)"/><path d="M655 430Q650 470 662 500" stroke="#c4c4ca" stroke-width="9" fill="none" opacity="0.55" filter="url(#bl6)"/><path d="M596 400Q600 450 592 500" stroke="#c8c8ce" stroke-width="8" fill="none" opacity="0.5" filter="url(#bl6)"/><path d="M560 300Q575 330 566 356" stroke="#c8c8ce" stroke-width="7" fill="none" opacity="0.45" filter="url(#bl6)"/><path d="M696 300Q681 330 690 356" stroke="#c8c8ce" stroke-width="7" fill="none" opacity="0.45" filter="url(#bl6)"/></g><path d="M546 519 C575 523 600 524.5 630 524.4 C660 524 688 521 709.4 517" stroke="#2a2a2c" stroke-width="1.3" fill="none"/><path d="M596.5 269.6 C601 284 614 296.6 628 296.6 C642 296.6 655 284 659.5 269.6" stroke="#2c2c2e" stroke-width="1.6" fill="none"/><g fill="none" stroke="#7a6ad8" stroke-width="1"><path d="M628.5 308.7 L629 420 L632.4 523.9"/><path d="M557.4 357.9 Q568 351 579.6 348 Q600 344.3 628.5 344.3 L656.7 344.3 Q680 346 698 358.5"/><path d="M567.8 420 Q576 414 585.6 411.3 L665.6 411.3 Q680 412 689.3 416.3"/><path d="M516 330.4 L557.4 357"/><path d="M740 330.4 L698.6 357"/><path d="M542.6 294.8 C530 310 515 332 504 348.5"/><path d="M713.4 294.8 C726 310 741 332 752 348.5"/><path d="M568.4 283.9 C556 286 548 290 542.6 294.8"/><path d="M687.6 283.9 C700 286 708 290 713.4 294.8"/><path d="M535.8 368.5 L546 357 L557.4 358.5"/><path d="M720.2 368.5 L710 357 L698.6 358.5"/></g><g fill="none" stroke="#5a8ae0" stroke-width="1.1"><path d="M559 276l2.5 8M565.5 274l2.5 8M689 274l-2.5 8M697 276l-2.5 8"/><path d="M592 269l3 6"/></g><g fill="none" stroke="#f0692c" stroke-width="1.5"><path d="M568.4 283.9 C572 310 580 345 583.2 368.9"/><path d="M687.2 283.9 C684 310 676 345 673 368.9"/><path d="M573.5 345.5h7M675.5 345.5h8"/></g><g fill="none" stroke="#18a84c" stroke-width="1.5"><path d="M583.2 369 C586 385 586 400 585.6 417.8 C583 450 583 490 582.6 523.9"/><path d="M673 369 C669 385 669 395 670.5 405 C673 425 674 440 674.4 447.4 C676 475 679 500 681.9 523"/><path d="M577.5 404h7M670.5 402.5l7-1.5"/></g><circle cx="582.6" cy="523.9" r="2.2" fill="#18a84c"/><circle cx="681.9" cy="523" r="2.2" fill="#18a84c"/><g fill="none" stroke="#9a6a2a" stroke-width="1.5"><path d="M568.4 283.9 Q581 281.5 596 271.5"/><path d="M687.2 283.9 Q675 281.5 660.5 271.5"/><path d="M542.6 294.8 Q550 308 553.6 324.4"/><path d="M713.6 294.8 Q706 308 701.7 324.4"/><path d="M543.5 318.5l7-3M712 318.5l-7-3"/></g><path d="M591 268 C596 284 612 297.6 628 297.6" stroke="#f22bd0" stroke-width="1.7" fill="none"/><path d="M628 297.6 C644 297.6 658 286 663 270" stroke="#c0204e" stroke-width="1.6" fill="none"/><path d="M614 288l1.5 5M620 291l1 5M662 277l4-1M660 281l4-1" stroke="#f060d8" stroke-width="1"/><circle cx="628.3" cy="298" r="1.8" fill="#c030c0"/><g fill="none" stroke-width="1.4"><path d="M553.6 324.4 Q555 340 557.4 358.5" stroke="#e860c8"/><path d="M701.7 324.4 Q700 340 698.1 358.5" stroke="#e860c8"/><path d="M557.4 358.5 Q562 380 564.8 388 Q567 405 567.2 419.3" stroke="#c83068"/><path d="M698.1 358.5 Q694 380 690.7 388 L687.8 404.4" stroke="#c83068"/><path d="M554.5 374.5l6.5-1.5M694.5 373l7 1.5" stroke="#c83068"/></g><g fill="none" stroke="#7a1848" stroke-width="1.5"><path d="M584 368.9 C576 380 570 398 567.8 417.8"/><path d="M671.5 368.9 C678 380 683 392 686.3 401.5"/><path d="M573.5 381.5l4.5 3M683 379.5l-5 3"/></g><circle cx="583.5" cy="368.5" r="2" fill="#5a2838"/><circle cx="672.5" cy="368.5" r="2" fill="#5a2838"/><g fill="none" stroke="#4a90e0" stroke-width="1.2"><path d="M567.8 420 Q571 432 566 440 Q563 446 560.4 448.9"/><path d="M553.5 476 L546.3 518.5"/><path d="M563 432l5 3M561.5 437l5 3"/><path d="M706 480l1 8"/></g><circle cx="546.3" cy="518.5" r="2" fill="#4a90e0"/><circle cx="567.2" cy="419.8" r="1.8" fill="#d050d0"/><g fill="#f00c0c"><circle cx="542.6" cy="294.8" r="2.6"/><circle cx="713.6" cy="294.8" r="2.6"/><circle cx="553.6" cy="324.4" r="2.6"/><circle cx="701.7" cy="324.4" r="2.6"/></g><circle cx="661" cy="270.5" r="2" fill="#f0501c"/></g></svg><div class="sep" style="left:321px;top:71px"></div><div class="abs" style="left:319px;top:80px;width:32px;height:28px;background:#111113;border:1px solid #060607;border-radius:5px"></div><div class="sep" style="left:321px;top:119px"></div><div class="sep" style="left:321px;top:199px"></div><div class="sep" style="left:321px;top:247px"></div><div class="abs" style="left:319px;top:256px;width:32px;height:28px;background:#111113;border:1px solid #060607;border-radius:5px"></div><div class="sep" style="left:321px;top:391px"></div><div class="sep" style="left:321px;top:471px"></div><div class="sep" style="left:321px;top:679px"></div><div class="sep" style="left:321px;top:727px"></div><div class="sep" style="left:321px;top:807px"></div><div class="sep" style="left:359px;top:71px"></div><div class="sep" style="left:359px;top:119px"></div><div class="sep" style="left:359px;top:231px"></div><div class="sep" style="left:359px;top:311px"></div><div class="sep" style="left:359px;top:423px"></div><div class="sep" style="left:359px;top:535px"></div><div class="sep" style="left:359px;top:615px"></div><div class="sep" style="left:359px;top:695px"></div><div class="sep" style="left:359px;top:775px"></div><svg style="left:0px;top:0px;" width="1920" height="1080" viewBox="0 0 1920 1080"><defs>
<linearGradient id="gL" x1="0" y1="0" x2="0" y2="1"><stop offset="0" stop-color="#e2e2e4"/><stop offset="1" stop-color="#8e8e92"/></linearGradient>
<linearGradient id="gM" x1="0" y1="0" x2="0" y2="1"><stop offset="0" stop-color="#9a9a9e"/><stop offset="1" stop-color="#5e5e62"/></linearGradient>
<linearGradient id="gH" x1="0" y1="0" x2="1" y2="0"><stop offset="0" stop-color="#6e6e72"/><stop offset="0.5" stop-color="#e0e0e2"/><stop offset="1" stop-color="#707074"/></linearGradient>
<linearGradient id="gB" x1="0" y1="0" x2="0" y2="1"><stop offset="0" stop-color="#1a4fc0"/><stop offset="0.55" stop-color="#3a8cf5"/><stop offset="1" stop-color="#4ab0ff"/></linearGradient>
<linearGradient id="gB2" x1="0" y1="0" x2="0" y2="1"><stop offset="0" stop-color="#45b4ff"/><stop offset="1" stop-color="#2f86f0"/></linearGradient>
<linearGradient id="gW" x1="0" y1="0" x2="0" y2="1"><stop offset="0" stop-color="#ffffff"/><stop offset="1" stop-color="#c8c8cc"/></linearGradient>
<pattern id="chk" width="3" height="3" patternUnits="userSpaceOnUse"><rect width="3" height="3" fill="#fff"/><rect width="1.5" height="1.5" fill="#222"/><rect x="1.5" y="1.5" width="1.5" height="1.5" fill="#222"/></pattern>
</defs><g transform="translate(323 82)"><path d="M8.5 2H15.5V11H20.5L12 21L3.5 11H8.5z" fill="url(#gB)"/><path d="M26 17.6V24H19.6z" fill="#a6a6aa"/></g><g transform="translate(323 130)"><path d="M1.4 9.100Q2 7 5 5.200L9 2.700Q11 2 13 3.200L16.400 5.200Q19.500 7.500 21.500 11L23.700 14.300L19.400 21.700Q15 20.500 12.500 18.800L10.300 17.400Q6 15 2.900 11.900Q1.200 10.500 1.400 9.100z" fill="url(#gW)"/><path d="M4.800 8.800Q9 7.600 13 12.600Q8.500 11.800 4.800 8.800z" fill="#2c2c30"/><path d="M21.200 10.600L17.200 20.600" stroke="#2c2c30" stroke-width="0.900"/><path d="M26 17.6V24H19.6z" fill="#a6a6aa"/></g><g transform="translate(323 162)"><path d="M0.7 1.6V9.8L7.7 7.2z" fill="#9c9ca0"/><circle cx="12.500" cy="11" r="5.800" fill="none" stroke="#b4b4b8" stroke-width="1.400" stroke-dasharray="1.400 1.900"/><path d="M21.800 4.800L24.200 6L20.200 14.400L17.800 13.200z" fill="#dcdcde"/><path d="M17.500 14L20 15.200Q18.500 20.500 11 21Q15.500 18.500 17.500 14z" fill="#ececee"/><path d="M26 17.6V24H19.6z" fill="#a6a6aa"/></g><g transform="translate(323 210)"><path d="M0.7 1.6V9.8L7.7 7.2z" fill="#9c9ca0"/><path d="M9 5Q12.5 7 16 5L20.5 7.5L18.5 11L17 10.4V17H8V10.4L6.5 11L4.5 7.5z" fill="url(#gH)"/><ellipse cx="12.5" cy="18" rx="7" ry="2.2" fill="none" stroke="#d0d0d2" stroke-width="1.5"/><path d="M26 17.6V24H19.6z" fill="#a6a6aa"/></g><g transform="translate(323 258)"><path d="M0.7 1.6V10.2L7.3 7.6z" fill="#f2f2f2"/><g transform="translate(8.5 4.5) scale(1.08)"><path d="M1 4Q1 1.5 3.5 1.5H11.5Q14 1.5 14 4V12.5H8.2V6.8H5.6V8.6H3V6.8H1Z" fill="url(#gB2)"/><rect x="9.6" y="-0.4" width="2.4" height="2.2" fill="url(#gB2)"/><rect x="3.9" y="8.6" width="0.9" height="2.6" fill="url(#gB2)"/><rect x="2" y="13.6" width="13" height="1.3" fill="#3a8cf5"/></g></g><g transform="translate(323 290)"><g transform="translate(6.5 2.5) scale(1.1)"><path d="M1 4Q1 1.5 3.5 1.5H11.5Q14 1.5 14 4V12.5H8.2V6.8H5.6V8.6H3V6.8H1Z" fill="url(#gM)"/><rect x="9.6" y="-0.4" width="2.4" height="2.2" fill="url(#gM)"/><rect x="3.9" y="8.6" width="0.9" height="2.6" fill="url(#gM)"/></g><path d="M3 19.5H16" stroke="#d0d0d2" stroke-width="1.2"/><circle cx="3" cy="19.5" r="1.7" fill="#e6e6e8"/><circle cx="16" cy="19.5" r="1.7" fill="#e6e6e8"/><path d="M26 17.6V24H19.6z" fill="#a6a6aa"/></g><g transform="translate(323 322)"><g transform="translate(6.5 2.5) scale(1.1)"><path d="M1 4Q1 1.5 3.5 1.5H11.5Q14 1.5 14 4V12.5H8.2V6.8H5.6V8.6H3V6.8H1Z" fill="url(#gM)"/><rect x="9.6" y="-0.4" width="2.4" height="2.2" fill="url(#gM)"/><rect x="3.9" y="8.6" width="0.9" height="2.6" fill="url(#gM)"/></g><path d="M1.5 19.5Q5 16.5 9 19.5T17 18.5" stroke="#d0d0d2" stroke-width="1.2" fill="none"/><circle cx="9" cy="19.5" r="1.6" fill="#e6e6e8"/><path d="M26 17.6V24H19.6z" fill="#a6a6aa"/></g><g transform="translate(323 354)"><circle cx="6.5" cy="3" r="2" fill="#77777b"/><path d="M2.5 7Q6.5 5 10.5 7L11 17H2z" fill="url(#gL)"/><path d="M6.5 7V17" stroke="#666" stroke-width="0.8"/><g transform="translate(11.5 8.5) scale(0.62)"><path d="M1 4Q1 1.5 3.5 1.5H11.5Q14 1.5 14 4V12.5H8.2V6.8H5.6V8.6H3V6.8H1Z" fill="url(#gM)"/><rect x="9.6" y="-0.4" width="2.4" height="2.2" fill="url(#gM)"/><rect x="3.9" y="8.6" width="0.9" height="2.6" fill="url(#gM)"/></g><rect x="10" y="17.2" width="12" height="1" fill="#8a8a8e"/></g><g transform="translate(323 402)"><path d="M0.7 1.6V9.8L7.7 7.2z" fill="#9c9ca0"/><path d="M6 19.5L16.5 8" stroke="#a0a0a4" stroke-width="1.3"/><circle cx="17.5" cy="7" r="2.4" fill="#e0e0e2"/></g><g transform="translate(323 434)"><path d="M4 7Q9 1 17 5L19 13Q12 11 8 16z" fill="url(#gM)"/><ellipse cx="6" cy="11.5" rx="3" ry="4.6" transform="rotate(-15 6 11.5)" fill="#1c1c1e" stroke="#77777b" stroke-width="1"/><path d="M3 3L8 6" stroke="#aaa" stroke-width="1"/><path d="M12 8L16.5 11" stroke="#e6e6e8" stroke-width="1.4"/><circle cx="17.3" cy="11.6" r="2" fill="#f0f0f0"/><path d="M26 17.6V24H19.6z" fill="#a6a6aa"/></g><g transform="translate(323 482)"><path d="M3 10L10 3.5V14.5L3 20.5z" fill="none" stroke="#8a8a8e" stroke-width="1.2"/><path d="M10 14.5H21L14 20.5H3" fill="none" stroke="#8a8a8e" stroke-width="1.2"/><path d="M7 8.5Q14 7 15.5 13.5L17.5 12.5L16 17L11.5 15.5L13.5 14.5Q12.5 10.5 7 12z" fill="#f0f0f0"/><path d="M7 8.5Q11 9 12 12L7 12z" fill="#151517"/></g><g transform="translate(323 514)"><path d="M3 9Q3 6.5 6 6L9 4.5H15L18 6Q21 6.5 21 9V17.5H3z" fill="url(#gM)"/><path d="M9 4.5L12 9.5L15 4.5M12 9.5V15" stroke="#4e4e52" stroke-width="1" fill="none"/><rect x="3" y="18" width="18" height="1.4" fill="#77777b"/></g><g transform="translate(323 546)"><path d="M8 3Q9.5 4.6 11 4V10.5H5.5V8.2L3.8 9.6L1 6.5z" fill="url(#gM)"/><path d="M16 3Q14.5 4.6 13 4V10.5H18.5V8.2L20.2 9.6L23 6.5z" fill="url(#gM)"/><rect x="5.5" y="12.5" width="5.5" height="6" fill="#8a8a8e"/><rect x="13" y="12.5" width="5.5" height="6" fill="#8a8a8e"/></g><g transform="translate(323 578)"><circle cx="12.500" cy="4" r="2.800" fill="#77777b"/><path d="M8 9Q12.500 6 17 9V17H8z" fill="#6e6e72"/><path d="M3 9.500Q7.500 13 11.500 10.500V22Q7 23.800 3 21z" fill="url(#gH)"/><path d="M22 9.500Q17.500 13 13.500 10.500V22Q18 23.800 22 21z" fill="url(#gH)"/></g><g transform="translate(323 610)"><circle cx="12.500" cy="4" r="2.800" fill="#77777b"/><path d="M8 9Q12.500 6 17 9V17H8z" fill="#6e6e72"/><path d="M3 9.500Q7.500 13 11.500 10.500V22Q7 23.800 3 21z" fill="url(#gH)"/><path d="M22 9.500Q17.500 13 13.500 10.500V22Q18 23.800 22 21z" fill="url(#gH)"/><path d="M4.800 2.800A2.500 2.500 0 1 0 5.600 6" fill="none" stroke="#c8c8cc" stroke-width="1.100"/><path d="M3.600 1.200L5.800 2.900L3.400 3.900z" fill="#c8c8cc"/></g><g transform="translate(323 642)"><circle cx="12.500" cy="3.800" r="2.700" fill="#77777b"/><path d="M1 19L7 10M24 19L18 10" stroke="#6a6a6e" stroke-width="1.800"/><path d="M6 0Q10 3 14 0L20 4L17.5 8.5L15 7.2V17H5V7.2L2.5 8.5L0 4Z" transform="translate(3 6.800) scale(0.950 0.920)" fill="url(#gL)"/></g><g transform="translate(323 690)"><path d="M6 0Q10 3 14 0L20 4L17.5 8.5L15 7.2V17H5V7.2L2.5 8.5L0 4Z" transform="translate(1 2.500) scale(0.700 1.120)" fill="#3a3a3e" stroke="#c8c8cc" stroke-width="1.300"/><path d="M4.500 5.500L10.500 9.500L5.500 13.500L10.500 17.500L5.500 21M7.500 4.500L7.500 21M3 7.500L10.500 13.500M10.500 5.500L5.500 9.500L10.500 13.500L5.500 17.500L10.500 21" stroke="#c8c8cc" stroke-width="0.700" fill="none"/><path d="M19.500 21V6" stroke="#f0f0f0" stroke-width="1.500"/><path d="M16.800 7L19.500 2L22.200 7z" fill="#f0f0f0"/><path d="M26 17.6V24H19.6z" fill="#a6a6aa"/></g><g transform="translate(323 738)"><path d="M0.7 1.6V9.8L7.7 7.2z" fill="#9c9ca0"/><path d="M15.5 3Q7 6 9.5 12.5Q12 18 21 18.5L21 15.5Q14.5 15 12.5 11.5Q11 7.5 16.5 5.5z" fill="url(#gM)"/><path d="M13 14.5l-1 1.6M15.5 15.6l-.6 1.8M18 16.2l-.3 1.9" stroke="#ddd" stroke-width="0.7"/><path d="M26 17.6V24H19.6z" fill="#a6a6aa"/></g><g transform="translate(323 770)"><path d="M2 15.5L15 3.5Q18 1.5 20 4Q21.5 6.5 18.5 8L5.5 19.5z" fill="url(#gM)"/><path d="M5 14.5l1.6 1.8M7.3 12.4l1.6 1.8M9.6 10.3l1.6 1.8M11.9 8.2l1.6 1.8M14.2 6.1l1.6 1.8" stroke="#d8d8da" stroke-width="0.8"/><path d="M16.5 5Q18.5 3.5 19.5 5.5Q19.5 7.5 17.5 7.5z" fill="#505054"/><path d="M26 17.6V24H19.6z" fill="#a6a6aa"/></g><g transform="translate(323 818)"><path d="M0.7 1.6V9.8L7.7 7.2z" fill="#9c9ca0"/><g transform="translate(5 4.5) scale(0.9)"><path d="M6 0Q10 3 14 0L20 4L17.5 8.5L15 7.2V17H5V7.2L2.5 8.5L0 4Z" fill="url(#gM)"/><rect x="7.6" y="3" width="4.8" height="13.4" fill="#e8e8ea"/><path d="M7.6 4.4h3.2M7.6 6h3.2M7.6 7.6h3.2M7.6 9.2h3.2M7.6 10.8h3.2M7.6 12.4h3.2M7.6 14h3.2M7.6 15.6h3.2" stroke="#3a3a3e" stroke-width="0.7"/></g></g><g transform="translate(323 850)"><g transform="translate(1.5 2.5) scale(1.0)"><path d="M6 0Q10 3 14 0L20 4L17.5 8.5L15 7.2V17H5V7.2L2.5 8.5L0 4Z" fill="url(#gM)"/><rect x="7.6" y="3" width="4.8" height="13.4" fill="#e8e8ea"/><path d="M7.6 4.4h3.2M7.6 6h3.2M7.6 7.6h3.2M7.6 9.2h3.2M7.6 10.8h3.2M7.6 12.4h3.2M7.6 14h3.2M7.6 15.6h3.2" stroke="#3a3a3e" stroke-width="0.7"/></g><path d="M26 17.6V24H19.6z" fill="#a6a6aa"/></g><g transform="translate(361 82)"><path d="M0.5 1.5L0.5 9L7 5.6z" fill="#707074"/><g fill="#5c5c60"><circle cx="15.5" cy="3.6" r="2"/><path d="M13 6L16 6.5L17.5 9.5L21 9.3L21 10.6L16.6 11L15.6 9.6L14.8 13L17.5 16L17 21H15.3L15.6 16.8L12.5 14.6L10 20.5H8.2L11 13.5L11.8 9L9.5 12L8.3 11.2L11.2 6.6z"/></g></g><g transform="translate(361 130)"><path d="M0.7 1.6V9.8L7.7 7.2z" fill="#9c9ca0"/><g transform="translate(5.8 4.4) scale(0.92)"><path d="M6 0Q10 3 14 0L20 4L17.5 8.5L15 7.2V17H5V7.2L2.5 8.5L0 4Z" fill="url(#gM)"/><path d="M3 3Q8 3 9 8T15.5 14" stroke="#e0e0e2" stroke-width="1.5" fill="none"/><circle cx="15.5" cy="14" r="1.4" fill="#e0e0e2"/><path d="M20 -1.5L22 0.5L13.6 8.9L11 9.6L11.6 6.9z" fill="#ececee"/></g></g><g transform="translate(361 162)"><g transform="translate(1.6 2.5) scale(1.08)"><path d="M6 0Q10 3 14 0L20 4L17.5 8.5L15 7.2V17H5V7.2L2.5 8.5L0 4Z" fill="url(#gM)"/><path d="M3 3Q8 3 9 8T15.5 14" stroke="#d8d8da" stroke-width="1.5" fill="none"/><circle cx="15.5" cy="14" r="1.4" fill="#d8d8da"/><path d="M20 -1.5L22 0.5L13.6 8.9L11 9.6L11.6 6.9z" fill="#ececee"/></g></g><g transform="translate(361 194)"><g transform="translate(1.6 2.5) scale(1.08)"><path d="M6 0Q10 3 14 0L20 4L17.5 8.5L15 7.2V17H5V7.2L2.5 8.5L0 4Z" fill="url(#gM)"/><path d="M3 3Q8 3 9 8T15.5 14" stroke="#ffffff" stroke-width="1.5" fill="none"/><circle cx="15.5" cy="14" r="1.4" fill="#ffffff"/><path d="M20 -1.5L22 0.5L13.6 8.9L11 9.6L11.6 6.9z" fill="#ececee"/></g></g><g transform="translate(361 242)"><path d="M0.7 1.6V9.8L7.7 7.2z" fill="#9c9ca0"/><g transform="translate(5.8 4.4) scale(0.92)"><path d="M6 0Q10 3 14 0L20 4L17.5 8.5L15 7.2V17H5V7.2L2.5 8.5L0 4Z" fill="url(#gM)"/><path d="M3 3Q8 3 9 8T15.5 14" stroke="#e0e0e2" stroke-width="1.5" fill="none"/><circle cx="15.5" cy="14" r="1.4" fill="#e0e0e2"/><path d="M20 -1.5L22 0.5L13.6 8.9L11 9.6L11.6 6.9z" fill="#ececee"/></g></g><g transform="translate(361 274)"><g transform="translate(1.6 2.5) scale(1.08)"><path d="M6 0Q10 3 14 0L20 4L17.5 8.5L15 7.2V17H5V7.2L2.5 8.5L0 4Z" fill="url(#gM)"/><path d="M3 3Q8 3 9 8T15.5 14" stroke="#e0e0e2" stroke-width="1.5" fill="none"/><circle cx="15.5" cy="14" r="1.4" fill="#e0e0e2"/><path d="M20 -1.5L22 0.5L13.6 8.9L11 9.6L11.6 6.9z" fill="#ececee"/></g><path d="M26 17.6V24H19.6z" fill="#a6a6aa"/></g><g transform="translate(361 322)"><path d="M0.7 1.6V9.8L7.7 7.2z" fill="#9c9ca0"/><rect x="7" y="9" width="9" height="10" fill="url(#chk)" transform="rotate(38 11 14)"/><path d="M12.5 4L20.5 3.2Q22.5 3.4 22.5 6V13.5Q22.5 16 20.5 16L14 17Q12 12 12.5 4z" fill="url(#gL)"/><ellipse cx="21" cy="9.6" rx="1.7" ry="6.4" fill="#e8e8ea"/></g><g transform="translate(361 354)"><path d="M0.7 1.6V9.8L7.7 7.2z" fill="#9c9ca0"/><g transform="translate(5.5 4.5) scale(0.88)"><path d="M6 0Q10 3 14 0L20 4L17.5 8.5L15 7.2V17H5V7.2L2.5 8.5L0 4Z" fill="url(#gM)"/><rect x="5.8" y="6.2" width="8.4" height="9" fill="url(#chk)"/></g></g><g transform="translate(361 386)"><g transform="translate(1.5 2.5) scale(1.02)"><path d="M6 0Q10 3 14 0L20 4L17.5 8.5L15 7.2V17H5V7.2L2.5 8.5L0 4Z" fill="url(#gM)"/><rect x="5.8" y="6.2" width="8.4" height="9" fill="url(#chk)"/></g></g><g transform="translate(361 434)"><path d="M0.7 1.6V9.8L7.7 7.2z" fill="#9c9ca0"/><path d="M5 13.500H24" stroke="#8a8a8e" stroke-width="1"/><circle cx="5.500" cy="13.500" r="1.400" fill="#252528" stroke="#a0a0a4" stroke-width="0.900"/><circle cx="15.6" cy="13.2" r="7.2" fill="url(#gM)"/><rect x="12.97" y="10.57" width="1.37" height="1.37" fill="#3a3a3e"/><rect x="12.97" y="14.46" width="1.37" height="1.37" fill="#3a3a3e"/><rect x="16.86" y="10.57" width="1.37" height="1.37" fill="#3a3a3e"/><rect x="16.86" y="14.46" width="1.37" height="1.37" fill="#3a3a3e"/></g><g transform="translate(361 466)"><circle cx="12.3" cy="12" r="9.3" fill="url(#gM)"/><rect x="8.91" y="8.61" width="1.77" height="1.77" fill="#3a3a3e"/><rect x="8.91" y="13.63" width="1.77" height="1.77" fill="#3a3a3e"/><rect x="13.93" y="8.61" width="1.77" height="1.77" fill="#3a3a3e"/><rect x="13.93" y="13.63" width="1.77" height="1.77" fill="#3a3a3e"/><path d="M26 17.6V24H19.6z" fill="#a6a6aa"/></g><g transform="translate(361 498)"><rect x="1" y="5.200" width="4.800" height="4.400" fill="#a8a8ac"/><rect x="2.800" y="6.600" width="1.200" height="1.600" fill="#3a3a3e"/><path d="M2 5.200V3.600Q2 2 3.400 2Q4.800 2 4.800 3.600V5.200" fill="none" stroke="#a8a8ac" stroke-width="1"/><rect x="15.600" y="1.200" width="8" height="21.600" rx="4" fill="#121214" stroke="#c4c4c8" stroke-width="1.300"/><circle cx="15.4" cy="12" r="7" fill="url(#gM)"/><rect x="12.84" y="9.45" width="1.33" height="1.33" fill="#3a3a3e"/><rect x="12.84" y="13.23" width="1.33" height="1.33" fill="#3a3a3e"/><rect x="16.62" y="9.45" width="1.33" height="1.33" fill="#3a3a3e"/><rect x="16.62" y="13.23" width="1.33" height="1.33" fill="#3a3a3e"/></g><g transform="translate(361 546)"><path d="M0.7 1.6V9.8L7.7 7.2z" fill="#9c9ca0"/><g transform="translate(7.5 3) scale(0.84)"><rect x="0" y="4" width="20" height="16.5" fill="url(#gM)"/><rect x="8.6" y="4" width="2.8" height="16.5" fill="#3a3a3e"/><path d="M6.4 1Q10 -1.5 13.6 1V9.5Q10 11 6.4 9.5z" fill="#e8e8ea"/><rect x="8.8" y="2.4" width="2.4" height="5" rx="1.1" fill="#6a6a6e"/><rect x="8.2" y="10.2" width="3.6" height="5.4" rx="1" fill="none" stroke="#e8e8ea" stroke-width="1.2"/><path d="M8.6 16.6h2.8M8.6 18.4h2.8" stroke="#c8c8cc" stroke-width="0.9"/></g></g><g transform="translate(361 578)"><g transform="translate(2 1.5) scale(1.0)"><rect x="0" y="4" width="20" height="16.5" fill="url(#gM)"/><rect x="8.6" y="4" width="2.8" height="16.5" fill="#3a3a3e"/><path d="M6.4 1Q10 -1.5 13.6 1V9.5Q10 11 6.4 9.5z" fill="#e8e8ea"/><rect x="8.8" y="2.4" width="2.4" height="5" rx="1.1" fill="#6a6a6e"/><rect x="8.2" y="10.2" width="3.6" height="5.4" rx="1" fill="none" stroke="#e8e8ea" stroke-width="1.2"/><path d="M8.6 16.6h2.8M8.6 18.4h2.8" stroke="#c8c8cc" stroke-width="0.9"/></g></g><g transform="translate(361 626)"><path d="M0.7 1.6V9.8L7.7 7.2z" fill="#9c9ca0"/><rect x="8" y="6" width="11" height="12.5" fill="url(#gM)"/><rect x="17.4" y="4.4" width="3.6" height="14.9" rx="1.8" fill="url(#gW)"/><ellipse cx="19.2" cy="18.1" rx="1.2" ry="0.9" fill="#2a2a2e"/></g><g transform="translate(361 658)"><rect x="2" y="3.5" width="18" height="16.5" fill="url(#gM)"/><rect x="18.4" y="1.9" width="3.6" height="18.9" rx="1.8" fill="url(#gW)"/><ellipse cx="20.2" cy="19.6" rx="1.2" ry="0.9" fill="#2a2a2e"/></g><g transform="translate(361 706)"><path d="M0.7 1.6V9.8L7.7 7.2z" fill="#9c9ca0"/><rect x="8" y="6" width="9.6" height="12.5" fill="url(#gM)"/><rect x="17.6" y="5" width="3.4" height="13.5" fill="url(#gW)"/></g><g transform="translate(361 738)"><rect x="2" y="3.5" width="16.6" height="16.5" fill="url(#gM)"/><rect x="18.6" y="2.5" width="3.4" height="17.5" fill="url(#gW)"/></g><g transform="translate(361 786)"><path d="M8 2.5H11V12.5Q12 14.5 13 12.5V2.5H16V18Q16 21.5 12 21.5Q8 21.5 8 18z" fill="url(#gL)"/><path d="M8 13Q12 17 16 13V18Q16 21.5 12 21.5Q8 21.5 8 18z" fill="#8a8a8e"/><path d="M1 12H5.2M3.6 9.8L6.2 12L3.6 14.2zM23 12H18.8M20.4 9.8L17.8 12L20.4 14.2z" stroke="#e8e8ea" stroke-width="1.3" fill="#e8e8ea"/></g></svg><div class="abs" style="left:404px;top:75px;width:32px;height:66px;background:#3a3a3e;border-radius:9px"></div><div class="abs" style="left:404px;top:147px;width:32px;height:95.5px;background:#3a3a3e;border-radius:9px"></div><div class="abs" style="left:404px;top:249px;width:32px;height:126px;background:#3a3a3e;border-radius:9px"></div><svg style="left:0px;top:0px;" width="1920" height="1080" viewBox="0 0 1920 1080"><defs><linearGradient id="vW" x1="0" y1="0" x2="0" y2="1"><stop offset="0" stop-color="#ffffff"/><stop offset="1" stop-color="#cfcfd2"/></linearGradient><linearGradient id="vB" x1="0" y1="0" x2="1" y2="0"><stop offset="0" stop-color="#0a5ce0"/><stop offset="0.6" stop-color="#1c8cff"/><stop offset="1" stop-color="#58b8ff"/></linearGradient><linearGradient id="vD" x1="0" y1="0" x2="1" y2="1"><stop offset="0" stop-color="#1c1c20"/><stop offset="0.5" stop-color="#c0c0c4"/><stop offset="1" stop-color="#48484c"/></linearGradient><radialGradient id="vF" cx="0.4" cy="0.35" r="0.8"><stop offset="0" stop-color="#fff0e0"/><stop offset="1" stop-color="#eec09a"/></radialGradient></defs><path d="M420.2 84L428.4 88V97L420.2 101.5L412 97V88z" fill="#a2a2a6"/><path d="M420.2 84L428.4 88L420.2 92L412 88z" fill="#c6c6ca"/><path d="M420.2 92L428.4 88V97L420.2 101.5z" fill="#88888c"/><path d="M421 101.8L429.5 97.3L431 98.6L423 102.5z" fill="#141416"/><circle cx="411.6" cy="100" r="2" fill="#a0a0a4"/><path d="M6 0Q10 3 14 0L20 4L17.5 8.5L15 7.2V17H5V7.2L2.5 8.5L0 4Z" transform="translate(410.6 115) scale(0.94 0.92)" fill="#7a7a7e"/><rect x="415.3" y="127" width="9.6" height="2" fill="#98989c"/><circle cx="422.5" cy="122" r="1.5" fill="none" stroke="#a0a0a4" stroke-width="0.8"/><circle cx="411.6" cy="130" r="2" fill="#a0a0a4"/><path d="M6 0Q10 3 14 0L20 4L17.5 8.5L15 7.2V17H5V7.2L2.5 8.5L0 4Z" transform="translate(411 157.4) scale(0.92 0.89)" fill="url(#vW)"/><circle cx="413.5" cy="194.5" r="3.6" fill="#e8e8ea"/><path d="M411.8 193.4h1.6M414.2 193.4h1.6M411.8 195.6h1.6M414.2 195.6h1.6" stroke="#4a4a4e" stroke-width="0.9"/><path d="M415 191L424.5 186L427.5 192" fill="none" stroke="#c8c8cc" stroke-width="0.9"/><path d="M6 0Q10 3 14 0L20 4L17.5 8.5L15 7.2V17H5V7.2L2.5 8.5L0 4Z" transform="translate(418.5 194) scale(0.55 0.55)" fill="url(#vW)"/><circle cx="420" cy="221.5" r="4.6" fill="url(#vW)"/><path d="M411.5 233.5Q412 228.5 417 227.6L420 228.6L423 227.6Q428 228.5 428.5 233.5z" fill="url(#vW)"/><g transform="translate(412 259.0)"><path d="M0.5 5L5 4L7 13.5Q4 14.5 2.5 13z" fill="#c8c8cc"/><ellipse cx="7.5" cy="13" rx="5" ry="1.8" fill="#8a8a8e"/><path d="M5 2.5Q10 -0.5 15.5 1.5Q14 7 13.5 12.5Q9 10.5 3.5 12Q5 7 5 2.5z" fill="url(#vB)"/></g><g transform="translate(412 289.5)"><path d="M0.5 5L5 4L7 13.5Q4 14.5 2.5 13z" fill="#2a2a2e"/><ellipse cx="7.5" cy="13" rx="5" ry="1.8" fill="#707074"/><path d="M5 2.5Q10 -0.5 15.5 1.5Q14 7 13.5 12.5Q9 10.5 3.5 12Q5 7 5 2.5z" fill="url(#vD)"/></g><path d="M414.5 326Q414.5 319 420.5 319Q426.5 319 426.5 325.5Q426.5 329.5 424 331L424.5 333L428 334.5V335.5H413V334.5L417 333L417.2 331Q414.5 329.5 414.5 326z" fill="url(#vF)"/><g fill="none" stroke="#e8e8ea" stroke-width="1"><circle cx="420" cy="356.7" r="7.8"/><ellipse cx="420" cy="356.7" rx="3.6" ry="7.8"/><path d="M420 349V364.5M412.2 356.7H427.8M413.3 352.7H426.7M413.3 360.7H426.7"/></g></svg>
<!-- sec_2d -->
<div class="abs" style="left:869px;top:43px;width:700px;height:20px;background:#1e1e21;"></div><div class="t" style="left:1195px;top:47px;font-size:13.5px;color:#ececee"><span style="display:inline-block;transform:scaleX(0.92);transform-origin:0 0">2D</span> <span style="font-size:12.4px;position:relative;top:1px;left:-3px">창</span></div><svg style="left:1555px;top:48px;" width="10" height="9" viewBox="0 0 10 9"><rect x="2.8" y="0.6" width="6.6" height="5.2" rx="1" fill="none" stroke="#d8d8d8" stroke-width="1.2"/><path d="M2.8 2.8H1.6Q0.6 2.8 0.6 3.8V7.4Q0.6 8.4 1.6 8.4H6.2Q7.2 8.4 7.2 7.4V5.8" fill="none" stroke="#8c8c90" stroke-width="1.2"/></svg><div class="abs" style="left:1493px;top:63px;width:38px;height:943px;background:#252528;"></div><div class="abs" style="left:1531px;top:63px;width:38px;height:943px;background:#252528;border-left:1px solid #2b2b2e"></div><div class="abs" style="left:869px;top:63px;width:624px;height:943px;background:#c8c8c8;border:2px solid #f0f0f0"></div><svg style="left:0px;top:0px;" width="1920" height="1080" viewBox="0 0 1920 1080"><defs><clipPath id="vp2"><rect x="871" y="65" width="620" height="939"/></clipPath></defs><g clip-path="url(#vp2)"><path d="M899.5 65V1004M931.7 65V1004M963.8 65V1004M996.0 65V1004M1028.1 65V1004M1060.2 65V1004M1124.6 65V1004M1156.7 65V1004M1188.9 65V1004M1221.0 65V1004M1253.2 65V1004M1285.3 65V1004M1317.5 65V1004M1349.6 65V1004M1381.8 65V1004M1413.9 65V1004M1446.1 65V1004M1478.2 65V1004M871 932.9H1491M871 900.7H1491M871 868.5H1491M871 836.4H1491M871 804.2H1491M871 772.1H1491M871 740.0H1491M871 707.8H1491M871 675.7H1491M871 643.5H1491M871 611.4H1491M871 579.2H1491M871 547.0H1491M871 514.9H1491M871 482.8H1491M871 450.6H1491M871 418.5H1491M871 386.3H1491M871 354.1H1491M871 322.0H1491M871 289.9H1491M871 257.7H1491M871 225.6H1491M871 193.4H1491M871 161.2H1491M871 129.1H1491M871 97.0H1491M871 997.1H1491" stroke="#bdbdbd" stroke-width="1" fill="none"/><g transform="translate(1092.4 413.3) scale(0.7175) translate(-628 -151)"><g fill="#b6b6b6"><path d="M607.5 240 L607.5 262 Q606 275 590 284 Q560 290 542.6 296 Q520 310 506 345 L535 367 Q550 350 557 360 Q563 400 568 420 Q556 450 547 520 L628 548 L709 520 Q700 450 688 420 Q693 400 699 360 Q706 350 721 367 L750 345 Q736 310 713.4 296 Q696 290 666 284 Q650 275 648.5 262 L648.5 240z"/><path d="M592.3 190 C591.5 170 600 151 628 151 C656 151 664.5 170 663.7 190 C664 196 663 200 661 203 C661 215 658 228 653 237 C648 245 640 251 628 253.5 C616 251 608 245 603 237 C598 228 595 215 595 203 C593 200 592 196 592.3 190z"/><path d="M506 345 L477.3 377.2 Q463 390 449.6 402.2 L421.8 437.4 Q410 449 399.6 459.6 L386 474 Q376 490 370 508 L366.5 521 Q368 525 371.5 523.5 L380 508 Q386 498 391 492.5 L397.7 493 Q396 500 396.8 504 Q399 508.5 401.4 506.9 Q405 501 407 493 Q411 485 416.2 478 Q418.5 472 417.1 467 L440.3 450.4 L468 433.7 Q484 424 497.7 411.5 Q511 398 519.9 385.6 L535 367 z"/><path d="M547 520 C546 540 547 560 549.7 571 C553 610 560 655 564.8 689 C562 705 559 722 560 736 C562 775 570 815 575 848 L566 897 L563.4 915 Q563.6 919.5 568 919.5 L599 919.5 Q603.6 919.5 603.6 915 L603.6 897 L597 840 C600 810 606 775 606.4 745.7 C607 728 604 712 605 698 C606 682 610 668 612 656 C616 620 622 580 624.5 545 L628 520 z"/><g transform="translate(1256 0) scale(-1 1)"><path d="M506 345 L477.3 377.2 Q463 390 449.6 402.2 L421.8 437.4 Q410 449 399.6 459.6 L386 474 Q376 490 370 508 L366.5 521 Q368 525 371.5 523.5 L380 508 Q386 498 391 492.5 L397.7 493 Q396 500 396.8 504 Q399 508.5 401.4 506.9 Q405 501 407 493 Q411 485 416.2 478 Q418.5 472 417.1 467 L440.3 450.4 L468 433.7 Q484 424 497.7 411.5 Q511 398 519.9 385.6 L535 367 z"/><path d="M547 520 C546 540 547 560 549.7 571 C553 610 560 655 564.8 689 C562 705 559 722 560 736 C562 775 570 815 575 848 L566 897 L563.4 915 Q563.6 919.5 568 919.5 L599 919.5 Q603.6 919.5 603.6 915 L603.6 897 L597 840 C600 810 606 775 606.4 745.7 C607 728 604 712 605 698 C606 682 610 668 612 656 C616 620 622 580 624.5 545 L628 520 z"/></g></g></g><path d="M1092.4 65V1004" stroke="#8e8e8e" stroke-width="1.2"/><path d="M871 965H1491" stroke="#959595" stroke-width="1.2"/><path d="M983 528.9H1018M1168 528.9H1210" stroke="#7a9cc8" stroke-width="1.3"/><path d="M873.9 537.5 C884 531 892 520 901.2 512.9 C909 507 917 504 925.8 504 C938 504 948 511 957 520.4 C966 530 975 534 983.2 537.5 L976.6 554.6 Q928 550.5 880.5 554.6z" fill="none" stroke="#5b9bd8" stroke-width="8" stroke-linejoin="round" opacity="0.8" transform="translate(0 0.6)"/><path d="M873.9 537.5 C884 531 892 520 901.2 512.9 C909 507 917 504 925.8 504 C938 504 948 511 957 520.4 C966 530 975 534 983.2 537.5 L976.6 554.6 Q928 550.5 880.5 554.6z" fill="#fff" stroke="#6a6a78" stroke-width="1"/><path d="M873.9 537.5 C884 531 892 520 901.2 512.9" fill="none" stroke="#3d7fb5" stroke-width="1.5"/><path d="M901.2 512.9 C909 507 917 504 925.8 504" fill="none" stroke="#7a7078" stroke-width="1.5"/><path d="M925.8 504 C938 504 948 511 957 520.4" fill="none" stroke="#8a6a3a" stroke-width="1.6"/><path d="M957 520.4 C966 530 975 534 983.2 537.5" fill="none" stroke="#b04878" stroke-width="1.5"/><path d="M874 537.5H983M929 506V552" stroke="#6a5ac0" stroke-width="1" stroke-dasharray="1.6 2.2" fill="none"/><path d="M892.6 518.1L899.4 523.9" stroke="#4a90d8" stroke-width="2.2" fill="none"/><path d="M899.1 509.6L904.9 516.4" stroke="#a08050" stroke-width="2.2" fill="none"/><path d="M902.7 516.2L908.3 521.8" stroke="#f01010" stroke-width="1.4" fill="none"/><path d="M904.7 518.2L910.3 523.8" stroke="#f01010" stroke-width="1.4" fill="none"/><path d="M925.8 499.0L925.8 507.0" stroke="#808088" stroke-width="2" fill="none"/><path d="M931.7 508.1L930.3 515.9" stroke="#f01010" stroke-width="1.4" fill="none"/><path d="M951.1 511.9L956.9 520.1" stroke="#a08050" stroke-width="2.4" fill="none"/><path d="M950.4 527.1L955.6 520.9" stroke="#f01010" stroke-width="1.4" fill="none"/><path d="M976.3 530.3L979.7 539.7" stroke="#e060c0" stroke-width="2.2" fill="none"/><path d="M873.8 542.5L882.2 539.5" stroke="#808088" stroke-width="1.8" fill="none"/><path d="M976.9 540.1L985.1 543.9" stroke="#808088" stroke-width="1.8" fill="none"/><circle cx="873.9" cy="537.5" r="2.6" fill="#2b7cad"/><circle cx="901.2" cy="512.9" r="2.6" fill="#2b7cad"/><circle cx="932.3" cy="506.3" r="2.6" fill="#2b7cad"/><circle cx="957" cy="520.4" r="2.6" fill="#2b7cad"/><circle cx="983.2" cy="537.5" r="2.6" fill="#2b7cad"/><circle cx="976.6" cy="554.6" r="2.6" fill="#2b7cad"/><circle cx="880.5" cy="554.6" r="2.6" fill="#2b7cad"/><g transform="translate(2195.0 0) scale(-1 1)"><path d="M873.9 537.5 C884 531 892 520 901.2 512.9 C909 507 917 504 925.8 504 C938 504 948 511 957 520.4 C966 530 975 534 983.2 537.5 L976.6 554.6 Q928 550.5 880.5 554.6z" fill="none" stroke="#5b9bd8" stroke-width="8" stroke-linejoin="round" opacity="0.8" transform="translate(0 0.6)"/><path d="M873.9 537.5 C884 531 892 520 901.2 512.9 C909 507 917 504 925.8 504 C938 504 948 511 957 520.4 C966 530 975 534 983.2 537.5 L976.6 554.6 Q928 550.5 880.5 554.6z" fill="#fff" stroke="#6a6a78" stroke-width="1"/><path d="M873.9 537.5 C884 531 892 520 901.2 512.9" fill="none" stroke="#3d7fb5" stroke-width="1.5"/><path d="M901.2 512.9 C909 507 917 504 925.8 504" fill="none" stroke="#7a7078" stroke-width="1.5"/><path d="M925.8 504 C938 504 948 511 957 520.4" fill="none" stroke="#8a6a3a" stroke-width="1.6"/><path d="M957 520.4 C966 530 975 534 983.2 537.5" fill="none" stroke="#b04878" stroke-width="1.5"/><path d="M874 537.5H983M929 506V552" stroke="#6a5ac0" stroke-width="1" stroke-dasharray="1.6 2.2" fill="none"/><path d="M892.6 518.1L899.4 523.9" stroke="#4a90d8" stroke-width="2.2" fill="none"/><path d="M899.1 509.6L904.9 516.4" stroke="#a08050" stroke-width="2.2" fill="none"/><path d="M902.7 516.2L908.3 521.8" stroke="#f01010" stroke-width="1.4" fill="none"/><path d="M904.7 518.2L910.3 523.8" stroke="#f01010" stroke-width="1.4" fill="none"/><path d="M925.8 499.0L925.8 507.0" stroke="#808088" stroke-width="2" fill="none"/><path d="M931.7 508.1L930.3 515.9" stroke="#f01010" stroke-width="1.4" fill="none"/><path d="M951.1 511.9L956.9 520.1" stroke="#a08050" stroke-width="2.4" fill="none"/><path d="M950.4 527.1L955.6 520.9" stroke="#f01010" stroke-width="1.4" fill="none"/><path d="M976.3 530.3L979.7 539.7" stroke="#e060c0" stroke-width="2.2" fill="none"/><path d="M873.8 542.5L882.2 539.5" stroke="#808088" stroke-width="1.8" fill="none"/><path d="M976.9 540.1L985.1 543.9" stroke="#808088" stroke-width="1.8" fill="none"/><circle cx="873.9" cy="537.5" r="2.6" fill="#2b7cad"/><circle cx="901.2" cy="512.9" r="2.6" fill="#2b7cad"/><circle cx="932.3" cy="506.3" r="2.6" fill="#2b7cad"/><circle cx="957" cy="520.4" r="2.6" fill="#2b7cad"/><circle cx="983.2" cy="537.5" r="2.6" fill="#2b7cad"/><circle cx="976.6" cy="554.6" r="2.6" fill="#2b7cad"/><circle cx="880.5" cy="554.6" r="2.6" fill="#2b7cad"/></g><path d="M1092.9 498.9 C1080 498 1069 488 1064.9 470.4 L1046.7 475.6 L1044.4 474 L1026.2 481.6 C1029 492 1032 500 1034.4 510.4 C1035 525 1026 531 1017.8 534.4 L1018.9 586 L1016.7 665.1 L1056.7 667.3 L1092.9 666 L1127.1 667.3 L1168.4 665.1 L1166.7 586 L1167.8 534.4 C1160 531 1151 525 1151.4 510.4 C1154 500 1157 492 1159.6 481.6 L1141 474 L1138.9 475.6 L1120.4 470.4 C1117 488 1106 498 1092.9 498.9z" fill="#fff"/><path d="M1092.9 498.9 C1080 498 1069 488 1064.9 470.4 L1046.7 475.6 L1044.4 474 L1026.2 481.6 C1029 492 1032 500 1034.4 510.4 C1035 525 1026 531 1017.8 534.4 L1018.9 586 L1016.7 665.1 L1056.7 667.3 L1092.9 666 L1127.1 667.3 L1168.4 665.1 L1166.7 586 L1167.8 534.4 C1160 531 1151 525 1151.4 510.4 C1154 500 1157 492 1159.6 481.6 L1141 474 L1138.9 475.6 L1120.4 470.4 C1117 488 1106 498 1092.9 498.9z" fill="none" stroke="#6a6a6a" stroke-width="1"/><path d="M1044.4 474 L1026.2 481.6 C1029 492 1032 500 1034.4 510.4 C1035 525 1026 531 1017.8 534.4 L1018.9 586 L1016.7 665.1 L1056.7 667.3" fill="none" stroke="#5b9bd8" stroke-width="6" stroke-linejoin="round" opacity="0.78" transform="translate(-1.6 1)"/><path d="M1018.9 586 L1016.7 665.1" fill="none" stroke="#3d7fb5" stroke-width="1.4"/><path d="M1026.2 481.6 C1029 492 1032 500 1034.4 510.4" fill="none" stroke="#8a6a3a" stroke-width="1.6"/><path d="M1034.4 510.4 C1035 525 1026 531 1017.8 534.4" fill="none" stroke="#b04878" stroke-width="1.6"/><path d="M1017.8 534.4 L1018.9 583" fill="none" stroke="#a84860" stroke-width="1.5"/><path d="M1064.9 470.4 L1046.7 475.6" fill="none" stroke="#8a6a3a" stroke-width="1.6"/><path d="M1044.4 474 L1026.2 481.6" fill="none" stroke="#6a78c0" stroke-width="1.6"/><path d="M1046.7 475.6 C1053 500 1057 525 1057.3 552.2" fill="none" stroke="#e8835a" stroke-width="3.6" opacity="0.85"/><path d="M1046.7 475.6 C1053 500 1057 525 1057.3 552.2" fill="none" stroke="#8a8078" stroke-width="1"/><path d="M1057.3 552.2 L1056.7 667.3" fill="none" stroke="#36a860" stroke-width="4.4" opacity="0.9"/><path d="M1057.3 552.2 L1056.7 667.3" fill="none" stroke="#1e7a44" stroke-width="1"/><path d="M1057.3 552.2 L1018.9 583" fill="none" stroke="#6a2850" stroke-width="4.6"/><path d="M1057.3 552.2 L1018.9 583" fill="none" stroke="#6f8fd0" stroke-width="1.6"/><path d="M1045.0 554.3L1052.0 562.7" stroke="#8a4a70" stroke-width="2" fill="none"/><path d="M1042.6 563.9L1049.4 558.1" stroke="#8a4a70" stroke-width="2" fill="none"/><path d="M1041.1 468.2L1043.9 475.8" stroke="#8a90d0" stroke-width="2.4" fill="none"/><path d="M1059.1 464.7L1061.9 473.3" stroke="#a08050" stroke-width="2" fill="none"/><path d="M1027.6 506.0L1038.4 504.0" stroke="#a08050" stroke-width="2" fill="none"/><path d="M1036.0 510.6L1044.0 510.6" stroke="#f01010" stroke-width="1.4" fill="none"/><path d="M1020.4 525.3L1025.6 532.7" stroke="#e060c0" stroke-width="2.4" fill="none"/><path d="M1013.5 543.5L1024.5 543.5" stroke="#c06080" stroke-width="1.8" fill="none"/><path d="M1050.5 534.5L1063.5 534.5" stroke="#f09060" stroke-width="2.6" fill="none"/><path d="M1052.5 537.0L1061.5 537.0" stroke="#f09060" stroke-width="2" fill="none"/><path d="M1051.0 576.5L1064.0 576.5" stroke="#40b870" stroke-width="2.6" fill="none"/><path d="M1053.0 579.0L1062.0 579.0" stroke="#40b870" stroke-width="2" fill="none"/><path d="M1013.0 580.5L1025.0 580.5" stroke="#e050d0" stroke-width="2.4" fill="none"/><path d="M1012.5 602.5L1023.5 602.5" stroke="#60a0d8" stroke-width="1.8" fill="none"/><circle cx="1064.9" cy="470.4" r="2.6" fill="#2b7cad"/><circle cx="1046.7" cy="475.6" r="2.6" fill="#2b7cad"/><circle cx="1044.4" cy="474" r="2.6" fill="#2b7cad"/><circle cx="1026.2" cy="481.6" r="2.6" fill="#2b7cad"/><circle cx="1034.4" cy="510.4" r="2.6" fill="#2b7cad"/><circle cx="1017.8" cy="534.4" r="2.6" fill="#2b7cad"/><circle cx="1018.9" cy="586" r="2.6" fill="#2b7cad"/><circle cx="1016.7" cy="665.1" r="2.6" fill="#2b7cad"/><circle cx="1056.7" cy="667.3" r="2.6" fill="#2b7cad"/><circle cx="1057.3" cy="552.2" r="2.6" fill="#2b7cad"/><circle cx="1056.2" cy="554.5" r="2.6" fill="#2b7cad"/><g transform="translate(2185.8 0) scale(-1 1)"><path d="M1044.4 474 L1026.2 481.6 C1029 492 1032 500 1034.4 510.4 C1035 525 1026 531 1017.8 534.4 L1018.9 586 L1016.7 665.1 L1056.7 667.3" fill="none" stroke="#5b9bd8" stroke-width="6" stroke-linejoin="round" opacity="0.78" transform="translate(-1.6 1)"/><path d="M1018.9 586 L1016.7 665.1" fill="none" stroke="#3d7fb5" stroke-width="1.4"/><path d="M1026.2 481.6 C1029 492 1032 500 1034.4 510.4" fill="none" stroke="#8a6a3a" stroke-width="1.6"/><path d="M1034.4 510.4 C1035 525 1026 531 1017.8 534.4" fill="none" stroke="#b04878" stroke-width="1.6"/><path d="M1017.8 534.4 L1018.9 583" fill="none" stroke="#a84860" stroke-width="1.5"/><path d="M1064.9 470.4 L1046.7 475.6" fill="none" stroke="#8a6a3a" stroke-width="1.6"/><path d="M1044.4 474 L1026.2 481.6" fill="none" stroke="#6a78c0" stroke-width="1.6"/><path d="M1046.7 475.6 C1053 500 1057 525 1057.3 552.2" fill="none" stroke="#e8835a" stroke-width="3.6" opacity="0.85"/><path d="M1046.7 475.6 C1053 500 1057 525 1057.3 552.2" fill="none" stroke="#8a8078" stroke-width="1"/><path d="M1057.3 552.2 L1056.7 667.3" fill="none" stroke="#36a860" stroke-width="4.4" opacity="0.9"/><path d="M1057.3 552.2 L1056.7 667.3" fill="none" stroke="#1e7a44" stroke-width="1"/><path d="M1057.3 552.2 L1018.9 583" fill="none" stroke="#6a2850" stroke-width="4.6"/><path d="M1057.3 552.2 L1018.9 583" fill="none" stroke="#6f8fd0" stroke-width="1.6"/><path d="M1045.0 554.3L1052.0 562.7" stroke="#8a4a70" stroke-width="2" fill="none"/><path d="M1042.6 563.9L1049.4 558.1" stroke="#8a4a70" stroke-width="2" fill="none"/><path d="M1041.1 468.2L1043.9 475.8" stroke="#8a90d0" stroke-width="2.4" fill="none"/><path d="M1059.1 464.7L1061.9 473.3" stroke="#a08050" stroke-width="2" fill="none"/><path d="M1027.6 506.0L1038.4 504.0" stroke="#a08050" stroke-width="2" fill="none"/><path d="M1036.0 510.6L1044.0 510.6" stroke="#f01010" stroke-width="1.4" fill="none"/><path d="M1020.4 525.3L1025.6 532.7" stroke="#e060c0" stroke-width="2.4" fill="none"/><path d="M1013.5 543.5L1024.5 543.5" stroke="#c06080" stroke-width="1.8" fill="none"/><path d="M1050.5 534.5L1063.5 534.5" stroke="#f09060" stroke-width="2.6" fill="none"/><path d="M1052.5 537.0L1061.5 537.0" stroke="#f09060" stroke-width="2" fill="none"/><path d="M1051.0 576.5L1064.0 576.5" stroke="#40b870" stroke-width="2.6" fill="none"/><path d="M1053.0 579.0L1062.0 579.0" stroke="#40b870" stroke-width="2" fill="none"/><path d="M1013.0 580.5L1025.0 580.5" stroke="#e050d0" stroke-width="2.4" fill="none"/><path d="M1012.5 602.5L1023.5 602.5" stroke="#60a0d8" stroke-width="1.8" fill="none"/><circle cx="1064.9" cy="470.4" r="2.6" fill="#2b7cad"/><circle cx="1046.7" cy="475.6" r="2.6" fill="#2b7cad"/><circle cx="1044.4" cy="474" r="2.6" fill="#2b7cad"/><circle cx="1026.2" cy="481.6" r="2.6" fill="#2b7cad"/><circle cx="1034.4" cy="510.4" r="2.6" fill="#2b7cad"/><circle cx="1017.8" cy="534.4" r="2.6" fill="#2b7cad"/><circle cx="1018.9" cy="586" r="2.6" fill="#2b7cad"/><circle cx="1016.7" cy="665.1" r="2.6" fill="#2b7cad"/><circle cx="1056.7" cy="667.3" r="2.6" fill="#2b7cad"/><circle cx="1057.3" cy="552.2" r="2.6" fill="#2b7cad"/><circle cx="1056.2" cy="554.5" r="2.6" fill="#2b7cad"/></g><path d="M1092.9 498.9 C1080 498 1069 488 1064.9 470.4" fill="none" stroke="#ea60d8" stroke-width="1.7"/><path d="M1092.9 498.9 C1106 498 1117 488 1120.4 470.4" fill="none" stroke="#a04868" stroke-width="1.7"/><path d="M1082.3 501.7L1085.7 492.3" stroke="#f070e0" stroke-width="2.2" fill="none"/><path d="M1112.8 479.9L1123.2 476.1" stroke="#c06888" stroke-width="2" fill="none"/><path d="M1019 534.9H1167M1019 584.4H1167" stroke="#6a5ac0" stroke-width="1" stroke-dasharray="1.6 2.2" fill="none"/><path d="M1092.9 500V665" stroke="#9ac8f0" stroke-width="2.2" fill="none"/><path d="M1092.9 500V665" stroke="#000" stroke-width="1.8" stroke-dasharray="3.2 2.2" fill="none"/><circle cx="1092.9" cy="498.9" r="2.6" fill="#2b7cad"/><circle cx="1092.9" cy="666" r="2.4" fill="#6a6a6a"/><rect x="1147.3" y="400.3" width="149.3" height="5.3" fill="#fff"/><path d="M1147.3 400.3H1296.6" stroke="#7088a8" stroke-width="1"/><path d="M1147.3 405.4H1181" stroke="#d070a0" stroke-width="1.6"/><path d="M1181 405.4H1214.5" stroke="#5a90c8" stroke-width="1.6"/><path d="M1214.5 405.4H1255.6" stroke="#e860d8" stroke-width="1.6"/><path d="M1255.6 405.4H1296.6" stroke="#b05070" stroke-width="1.6"/><path d="M1141 401H1153M1291 401H1303" stroke="#f07040" stroke-width="2.2"/><path d="M1174.5 399.0L1174.5 409.0" stroke="#d070a0" stroke-width="2.2" fill="none"/><path d="M1208.0 399.0L1208.0 409.0" stroke="#5a9ad8" stroke-width="2" fill="none"/><path d="M1247.0 399.0L1247.0 409.0" stroke="#f060e0" stroke-width="2.2" fill="none"/><path d="M1288.5 399.0L1288.5 409.0" stroke="#b05070" stroke-width="2" fill="none"/><circle cx="1147.3" cy="400.5" r="2.4" fill="#2b7cad"/><circle cx="1147.3" cy="405.4" r="2.4" fill="#2b7cad"/><circle cx="1181" cy="405.4" r="2.4" fill="#2b7cad"/><circle cx="1214.5" cy="405.4" r="2.4" fill="#2b7cad"/><circle cx="1255.6" cy="405.4" r="2.4" fill="#2b7cad"/><circle cx="1296.6" cy="400.5" r="2.4" fill="#2b7cad"/><circle cx="1296.6" cy="405.4" r="2.4" fill="#2b7cad"/><path d="M1414.5 467.6 C1402 467.5 1390 464 1382 456 L1367.1 460.4 L1346 468.2 C1347 480 1350 490 1352.6 500 L1354 507 C1354.5 522 1349 533 1341.7 538.4 L1343 583.3 L1341.2 661.6 L1414.5 661.6 L1487.8 661.6 L1486 583.3 L1487.3 538.4 C1480 533 1474.5 522 1475 507 L1476.4 500 C1479 490 1482 480 1483 468.2 L1461.9 460.4 L1447 456 C1439 464 1427 467.5 1414.5 467.6z" fill="#fff"/><path d="M1341.2 661.6H1487.8" stroke="#8a8a8a" stroke-width="1.4"/><path d="M1382 456 L1367.1 460.4" fill="none" stroke="#8a6a3a" stroke-width="1.6"/><path d="M1367.1 460.4 L1346 468.2" fill="none" stroke="#6a78c0" stroke-width="1.6"/><path d="M1346 468.2 C1347 480 1350 490 1352.6 500" fill="none" stroke="#70606a" stroke-width="1.6"/><path d="M1354 507 C1354.5 522 1349 533 1341.7 538.4" fill="none" stroke="#2f78b0" stroke-width="1.6"/><path d="M1341.7 538.4 L1343 583.3" fill="none" stroke="#b05070" stroke-width="1.5"/><path d="M1343 583.3 L1341.2 661.6" fill="none" stroke="#2f78b0" stroke-width="1.5"/><path d="M1352.6 502.6H1414.5M1353.4 507.4H1414.5" stroke="#a060a8" stroke-width="1.7" fill="none"/><path d="M1402.5 499.0L1402.5 511.0" stroke="#c070c0" stroke-width="2.2" fill="none"/><path d="M1362.0 453.3L1365.0 461.7" stroke="#8a90d0" stroke-width="2.4" fill="none"/><path d="M1376.5 449.8L1379.5 458.2" stroke="#a08050" stroke-width="2.2" fill="none"/><path d="M1341.7 475.9L1352.3 473.1" stroke="#807078" stroke-width="2" fill="none"/><path d="M1346.1 499.9L1355.9 498.1" stroke="#a08050" stroke-width="2" fill="none"/><path d="M1355 498l6 2.5M1355 511l6 -3.5M1357 496.5l3 4" stroke="#f01010" stroke-width="1.5" fill="none"/><path d="M1342.5 514.5L1353.5 514.5" stroke="#3a90d0" stroke-width="1.8" fill="none"/><path d="M1336.5 547.0L1347.5 547.0" stroke="#c06080" stroke-width="1.8" fill="none"/><path d="M1337.5 583.5L1348.5 583.5" stroke="#f060e0" stroke-width="2.2" fill="none"/><path d="M1336.5 599.5L1347.5 599.5" stroke="#60a0d8" stroke-width="1.8" fill="none"/><circle cx="1382" cy="456" r="2.6" fill="#2b7cad"/><circle cx="1367.1" cy="460.4" r="2.6" fill="#2b7cad"/><circle cx="1346" cy="468.2" r="2.6" fill="#2b7cad"/><circle cx="1352.6" cy="500" r="2.6" fill="#2b7cad"/><circle cx="1354" cy="507" r="2.6" fill="#2b7cad"/><circle cx="1341.7" cy="538.4" r="2.6" fill="#2b7cad"/><circle cx="1343" cy="583.3" r="2.6" fill="#2b7cad"/><circle cx="1341.2" cy="661.6" r="2.6" fill="#2b7cad"/><g transform="translate(2829.0 0) scale(-1 1)"><path d="M1382 456 L1367.1 460.4" fill="none" stroke="#8a6a3a" stroke-width="1.6"/><path d="M1367.1 460.4 L1346 468.2" fill="none" stroke="#6a78c0" stroke-width="1.6"/><path d="M1346 468.2 C1347 480 1350 490 1352.6 500" fill="none" stroke="#70606a" stroke-width="1.6"/><path d="M1354 507 C1354.5 522 1349 533 1341.7 538.4" fill="none" stroke="#2f78b0" stroke-width="1.6"/><path d="M1341.7 538.4 L1343 583.3" fill="none" stroke="#b05070" stroke-width="1.5"/><path d="M1343 583.3 L1341.2 661.6" fill="none" stroke="#2f78b0" stroke-width="1.5"/><path d="M1352.6 502.6H1414.5M1353.4 507.4H1414.5" stroke="#a060a8" stroke-width="1.7" fill="none"/><path d="M1402.5 499.0L1402.5 511.0" stroke="#c070c0" stroke-width="2.2" fill="none"/><path d="M1362.0 453.3L1365.0 461.7" stroke="#8a90d0" stroke-width="2.4" fill="none"/><path d="M1376.5 449.8L1379.5 458.2" stroke="#a08050" stroke-width="2.2" fill="none"/><path d="M1341.7 475.9L1352.3 473.1" stroke="#807078" stroke-width="2" fill="none"/><path d="M1346.1 499.9L1355.9 498.1" stroke="#a08050" stroke-width="2" fill="none"/><path d="M1355 498l6 2.5M1355 511l6 -3.5M1357 496.5l3 4" stroke="#f01010" stroke-width="1.5" fill="none"/><path d="M1342.5 514.5L1353.5 514.5" stroke="#3a90d0" stroke-width="1.8" fill="none"/><path d="M1336.5 547.0L1347.5 547.0" stroke="#c06080" stroke-width="1.8" fill="none"/><path d="M1337.5 583.5L1348.5 583.5" stroke="#f060e0" stroke-width="2.2" fill="none"/><path d="M1336.5 599.5L1347.5 599.5" stroke="#60a0d8" stroke-width="1.8" fill="none"/><circle cx="1382" cy="456" r="2.6" fill="#2b7cad"/><circle cx="1367.1" cy="460.4" r="2.6" fill="#2b7cad"/><circle cx="1346" cy="468.2" r="2.6" fill="#2b7cad"/><circle cx="1352.6" cy="500" r="2.6" fill="#2b7cad"/><circle cx="1354" cy="507" r="2.6" fill="#2b7cad"/><circle cx="1341.7" cy="538.4" r="2.6" fill="#2b7cad"/><circle cx="1343" cy="583.3" r="2.6" fill="#2b7cad"/><circle cx="1341.2" cy="661.6" r="2.6" fill="#2b7cad"/></g><path d="M1414.5 467.6 C1402 467.5 1390 464 1382 456" fill="none" stroke="#d868b0" stroke-width="1.7"/><path d="M1414.5 467.6 C1427 467.5 1439 464 1447 456" fill="none" stroke="#3d7fb5" stroke-width="1.7"/><path d="M1406.6 461.0L1407.4 471.0" stroke="#f070c8" stroke-width="2.2" fill="none"/><path d="M1439.1 455.6L1444.9 462.4" stroke="#60a0d8" stroke-width="2.2" fill="none"/><path d="M1342 538.4H1487M1343 583.3H1486" stroke="#6a5ac0" stroke-width="1" stroke-dasharray="1.6 2.2" fill="none"/><path d="M1414.5 469V660" stroke="#9ac8f0" stroke-width="2.2" fill="none"/><path d="M1414.5 469V660" stroke="#000" stroke-width="1.8" stroke-dasharray="3.2 2.2" fill="none"/><circle cx="1414.5" cy="467.6" r="2.6" fill="#2b7cad"/><circle cx="1414.5" cy="502.6" r="2.6" fill="#2b7cad"/><circle cx="1414.5" cy="507.4" r="2.6" fill="#2b7cad"/><circle cx="1414.5" cy="661.6" r="2.4" fill="#3a3a3a"/></g></svg><div class="sep" style="left:1498px;top:71px"></div><div class="sep" style="left:1498px;top:407px"></div><div class="sep" style="left:1498px;top:455px"></div><div class="sep" style="left:1498px;top:535px"></div><div class="sep" style="left:1498px;top:615px"></div><div class="sep" style="left:1498px;top:663px"></div><div class="sep" style="left:1536px;top:71px"></div><div class="abs" style="left:1534px;top:80px;width:32px;height:28px;background:#111113;border:1px solid #060607;border-radius:5px"></div><div class="sep" style="left:1536px;top:215px"></div><div class="sep" style="left:1536px;top:263px"></div><div class="sep" style="left:1536px;top:311px"></div><div class="sep" style="left:1536px;top:423px"></div><div class="sep" style="left:1536px;top:503px"></div><div class="sep" style="left:1536px;top:583px"></div><div class="sep" style="left:1536px;top:631px"></div><svg style="left:0px;top:0px;" width="1920" height="1080" viewBox="0 0 1920 1080"><g transform="translate(1500 82)"><path d="M0.7 1.6V9.8L7.7 7.2z" fill="#9c9ca0"/><path d="M6 20H20.5V7z" fill="url(#gM)" stroke="#77777b" stroke-width="0.8"/></g><g transform="translate(1500 114)"><path d="M0.7 1.6V9.8L7.7 7.2z" fill="#9c9ca0"/><path d="M5 19.5H19.5V6z" fill="none" stroke="#d0d0d2" stroke-width="1.3"/><circle cx="5" cy="19.5" r="1.7" fill="#e6e6e8"/><circle cx="19.5" cy="19.5" r="1.7" fill="#e6e6e8"/><circle cx="19.5" cy="6" r="1.7" fill="#e6e6e8"/><path d="M26 17.6V24H19.6z" fill="#a6a6aa"/></g><g transform="translate(1500 146)"><path d="M2 3H9V20H2z" fill="url(#gM)"/><path d="M9 3L19.5 12L13 20" fill="none" stroke="#c8c8cc" stroke-width="2.2"/><circle cx="19.5" cy="12" r="1.8" fill="#e6e6e8"/><circle cx="13" cy="20" r="1.8" fill="#e6e6e8"/><path d="M26 17.6V24H19.6z" fill="#a6a6aa"/></g><g transform="translate(1500 178)"><path d="M2 3H12Q13 10 21.5 11V20H2z" fill="url(#gM)"/><path d="M26 17.6V24H19.6z" fill="#a6a6aa"/></g><g transform="translate(1500 210)"><path d="M2 3H12Q13 8 20.5 8.5V19.5H2z" fill="url(#gM)"/><path d="M4.5 6H10.5Q12.5 10.5 18 11V17H4.5z" fill="none" stroke="#d8d8da" stroke-width="1.2"/><path d="M26 17.6V24H19.6z" fill="#a6a6aa"/></g><g transform="translate(1500 242)"><path d="M4 3L8 2L12 5L16 2L20 3L19 10L21 21H3L5 10z" fill="url(#gL)"/><path d="M9 6L15 9L9 12L15 15L9 18M15 6L9 9L15 12L9 15L15 18" stroke="#2a2a2e" stroke-width="1" fill="none"/><path d="M9.5 2.5L12 6L14.5 2.5" fill="#2a2a2e"/></g><g transform="translate(1500 274)"><path d="M2 3H13L21.5 10V20H2z" fill="url(#gM)"/><path d="M4.5 5.5H12L19 11.5V17.5H4.5z" fill="none" stroke="#e6e6e8" stroke-width="1.1" stroke-dasharray="1.6 1.4"/><path d="M26 17.6V24H19.6z" fill="#a6a6aa"/></g><g transform="translate(1500 306)"><rect x="2" y="7" width="11" height="13" fill="url(#gM)"/><path d="M4.5 13H10.5V16L7.5 18.5L4.5 16z" fill="#1c1c1e" stroke="#e0e0e2" stroke-width="1"/><path d="M12 3H22V9L17 13L12 9z" fill="url(#gW)"/></g><g transform="translate(1500 338)"><path d="M0.7 1.6V9.8L7.7 7.2z" fill="#9c9ca0"/><path d="M4 22L20 7M8 9L21 21" stroke="#b0b0b4" stroke-width="1.2"/><circle cx="13.6" cy="13.6" r="1.8" fill="#e6e6e8"/></g><g transform="translate(1500 370)"><path d="M0.7 1.6V9.8L7.7 7.2z" fill="#9c9ca0"/><path d="M11 8L15 4.5L20 6V19.5H9V12L11 11z" fill="none" stroke="#e6e6e8" stroke-width="1.5"/></g><g transform="translate(1500 418)"><path d="M2 4Q2 2.5 4 2.5H10V20.5H4Q2 20.5 2 19z" fill="url(#gL)"/><rect x="10" y="6" width="10" height="11" fill="#707074"/><path d="M12.5 8.5V15" stroke="#e6e6e8" stroke-width="1"/><circle cx="12.5" cy="8.5" r="1" fill="#e6e6e8"/><circle cx="12.5" cy="15" r="1" fill="#e6e6e8"/></g><g transform="translate(1500 466)"><path d="M0.7 1.6V9.8L7.7 7.2z" fill="#9c9ca0"/><path d="M9.5 4V20" stroke="#d0d0d2" stroke-width="1.1"/><circle cx="9.5" cy="4" r="1.3" fill="#e6e6e8"/><circle cx="9.5" cy="20" r="1.3" fill="#e6e6e8"/><rect x="13" y="3.5" width="7" height="17" fill="url(#gM)"/><path d="M13 5.0h4M13 6.8h4M13 8.6h4M13 10.4h4M13 12.2h4M13 14.0h4M13 15.8h4M13 17.6h4M13 19.4h4" stroke="#d8d8da" stroke-width="0.7"/></g><g transform="translate(1500 498)"><path d="M2.5 6H21.5" stroke="#d0d0d2" stroke-width="1.1"/><circle cx="2.5" cy="6" r="1.3" fill="#e6e6e8"/><circle cx="21.5" cy="6" r="1.3" fill="#e6e6e8"/><rect x="2" y="11" width="20" height="7.5" fill="url(#gM)"/><path d="M3.2 11v4M5.1 11v4M7.0 11v4M8.9 11v4M10.8 11v4M12.7 11v4M14.6 11v4M16.5 11v4M18.4 11v4M20.3 11v4" stroke="#d8d8da" stroke-width="0.7"/></g><g transform="translate(1500 546)"><path d="M0.7 1.6V9.8L7.7 7.2z" fill="#9c9ca0"/><text x="15.5" y="20" font-family="'Liberation Serif',serif" font-size="24" text-anchor="middle" fill="#d4d4d6">A</text></g><g transform="translate(1500 578)"><text x="12" y="20.6" font-family="'Liberation Serif',serif" font-size="26.5" text-anchor="middle" fill="#c8c8cc">A</text><path d="M26 17.6V24H19.6z" fill="#a6a6aa"/></g><g transform="translate(1500 626)"><rect x="2" y="3" width="21" height="17" fill="#38383c"/><path d="M2 3V20M12.500 3V20M23 3V20" stroke="#9a9a9e" stroke-width="1.100"/><path d="M2 3H23M2 20H23" stroke="#5a5a5e" stroke-width="0.800"/><path d="M7.300 4V19.500M17.800 4V19.500" stroke="#e0e0e2" stroke-width="1.100" stroke-dasharray="1.400 1.600"/><path d="M26 17.6V24H19.6z" fill="#a6a6aa"/></g><g transform="translate(1500 674)"><path d="M0.7 1.6V9.8L7.7 7.2z" fill="#9c9ca0"/><path d="M9 8L15 5L21 9V19L13 21L8 17z" fill="url(#gM)"/><path d="M11 11l5-2M11 14l6-2M12 17l5-2" stroke="#3a3a3e" stroke-width="1"/><path d="M10 20L21 11" stroke="#e6e6e8" stroke-width="1.8"/><path d="M26 17.6V24H19.6z" fill="#a6a6aa"/></g><g transform="translate(1500 706)"><circle cx="7.500" cy="4.500" r="2.500" fill="#66666a"/><path d="M2.500 10Q7.500 6 12.500 10L12 21.500H3z" fill="#66666a"/><path d="M9.500 12.500L13 10.500L15.500 12.500V21.500H9z" fill="#c4c4c8"/><path d="M16 12.500L19 10.500L22 13V21.500H16.500z" fill="#a8a8ac"/></g><g transform="translate(1538 82)"><path d="M0.7 1.6V10.2L7.3 7.6z" fill="#f2f2f2"/><g transform="translate(8.5 4.5) scale(1.08)"><path d="M1 4Q1 1.5 3.5 1.5H11.5Q14 1.5 14 4V12.5H8.2V6.8H5.6V8.6H3V6.8H1Z" fill="url(#gB2)"/><rect x="9.6" y="-0.4" width="2.4" height="2.2" fill="url(#gB2)"/><rect x="3.9" y="8.6" width="0.9" height="2.6" fill="url(#gB2)"/><rect x="2" y="13.6" width="13" height="1.3" fill="#3a8cf5"/></g></g><g transform="translate(1538 114)"><g transform="translate(6.5 2.5) scale(1.1)"><path d="M1 4Q1 1.5 3.5 1.5H11.5Q14 1.5 14 4V12.5H8.2V6.8H5.6V8.6H3V6.8H1Z" fill="url(#gM)"/><rect x="9.6" y="-0.4" width="2.4" height="2.2" fill="url(#gM)"/><rect x="3.9" y="8.6" width="0.9" height="2.6" fill="url(#gM)"/></g><path d="M3 19.5H16" stroke="#d0d0d2" stroke-width="1.2"/><circle cx="3" cy="19.5" r="1.7" fill="#e6e6e8"/><circle cx="16" cy="19.5" r="1.7" fill="#e6e6e8"/><path d="M26 17.6V24H19.6z" fill="#a6a6aa"/></g><g transform="translate(1538 146)"><g transform="translate(6.5 2.5) scale(1.1)"><path d="M1 4Q1 1.5 3.5 1.5H11.5Q14 1.5 14 4V12.5H8.2V6.8H5.6V8.6H3V6.8H1Z" fill="url(#gM)"/><rect x="9.6" y="-0.4" width="2.4" height="2.2" fill="url(#gM)"/><rect x="3.9" y="8.6" width="0.9" height="2.6" fill="url(#gM)"/></g><path d="M1.5 19.5Q5 16.5 9 19.5T17 18.5" stroke="#d0d0d2" stroke-width="1.2" fill="none"/><circle cx="9" cy="19.5" r="1.6" fill="#e6e6e8"/><path d="M26 17.6V24H19.6z" fill="#a6a6aa"/></g><g transform="translate(1538 178)"><circle cx="3" cy="4" r="1.7" fill="none" stroke="#a0a0a4" stroke-width="1"/><path d="M4.2 5.4L6 7.6" stroke="#a0a0a4" stroke-width="1"/><g transform="translate(7 4.5) scale(1.08)"><path d="M1 4Q1 1.5 3.5 1.5H11.5Q14 1.5 14 4V12.5H8.2V6.8H5.6V8.6H3V6.8H1Z" fill="url(#gM)"/><rect x="9.6" y="-0.4" width="2.4" height="2.2" fill="url(#gM)"/><rect x="3.9" y="8.6" width="0.9" height="2.6" fill="url(#gM)"/><rect x="2" y="13.6" width="13" height="1.3" fill="#8a8a8e"/></g></g><g transform="translate(1538 226)"><path d="M1 14.5Q4 8.5 12 7.5L11.5 5Q11.5 2.5 14 2.5H20Q23.5 3 23.5 8V14.5z" fill="url(#gM)"/><path d="M14.2 4.8H19.5Q21.2 5.2 21.2 7.6H13.8z" fill="#252528"/><path d="M1 16.200H23.500" stroke="#8a8a8e" stroke-width="1.200"/><path d="M1.500 18H23.500" stroke="#5a5a5e" stroke-width="1.200"/><path d="M2.500 19.700H23" stroke="#3c3c40" stroke-width="1.100"/></g><g transform="translate(1538 274)"><path d="M0.7 1.6V9.8L7.7 7.2z" fill="#9c9ca0"/><path d="M6 0Q10 3 14 0L20 4L17.5 8.5L15 7.2V17H5V7.2L2.5 8.5L0 4Z" transform="translate(5.5 4.5) scale(0.9)" fill="url(#gM)"/></g><g transform="translate(1538 322)"><path d="M0.7 1.6V9.8L7.7 7.2z" fill="#9c9ca0"/><rect x="7" y="9" width="9" height="10" fill="url(#chk)" transform="rotate(38 11 14)"/><path d="M12.5 4L20.5 3.2Q22.5 3.4 22.5 6V13.5Q22.5 16 20.5 16L14 17Q12 12 12.5 4z" fill="url(#gL)"/><ellipse cx="21" cy="9.6" rx="1.7" ry="6.4" fill="#e8e8ea"/></g><g transform="translate(1538 354)"><path d="M0.7 1.6V9.8L7.7 7.2z" fill="#9c9ca0"/><g transform="translate(5.5 4.5) scale(0.88)"><path d="M6 0Q10 3 14 0L20 4L17.5 8.5L15 7.2V17H5V7.2L2.5 8.5L0 4Z" fill="url(#gM)"/><rect x="5.8" y="6.2" width="8.4" height="9" fill="url(#chk)"/></g></g><g transform="translate(1538 386)"><g transform="translate(1.5 2.5) scale(1.02)"><path d="M6 0Q10 3 14 0L20 4L17.5 8.5L15 7.2V17H5V7.2L2.5 8.5L0 4Z" fill="url(#gM)"/><rect x="5.8" y="6.2" width="8.4" height="9" fill="url(#chk)"/></g></g><g transform="translate(1538 434)"><path d="M0.7 1.6V9.8L7.7 7.2z" fill="#9c9ca0"/><path d="M6 21L21 6.5" stroke="#e8e8ea" stroke-width="1.8" stroke-dasharray="3.4 2"/></g><g transform="translate(1538 466)"><path d="M2.5 7H20.5" stroke="#e8e8ea" stroke-width="1.8" stroke-dasharray="3.6 2"/><path d="M3 14.5H20" stroke="#c8c8cc" stroke-width="1"/><circle cx="3" cy="14.5" r="1.3" fill="#e6e6e8"/><circle cx="20" cy="14.5" r="1.3" fill="#e6e6e8"/><path d="M26 17.6V24H19.6z" fill="#a6a6aa"/></g><g transform="translate(1538 514)"><path d="M0.7 1.6V9.8L7.7 7.2z" fill="#9c9ca0"/><path d="M13.500 4Q8.500 4.500 9 5.800Q9.500 7 14 7.300Q9 7.800 9 9.200Q9.500 10.500 14 10.800Q9 11.300 9 12.700Q9.500 14 14 14.300Q9 14.800 9 16.200Q9.500 17.500 14 17.800Q9.500 18.300 9.500 19.800" stroke="#dcdcde" stroke-width="1.400" fill="none"/><path d="M19.500 4V20" stroke="#c8c8cc" stroke-width="1"/><circle cx="19.500" cy="4" r="1.300" fill="#e6e6e8"/><circle cx="19.500" cy="20" r="1.300" fill="#e6e6e8"/></g><g transform="translate(1538 546)"><path d="M2 10.500V6Q3.300 3.500 4.600 6V8.500Q5.900 11 7.200 8.500V6Q8.500 3.500 9.800 6V8.500Q11.100 11 12.400 8.500V6Q13.700 3.500 15 6V8.500Q16.300 11 17.600 8.500V6Q18.900 3.500 20.200 6V10.500" stroke="#dcdcde" stroke-width="1.300" fill="none"/><path d="M3 16H20" stroke="#c8c8cc" stroke-width="1"/><circle cx="3" cy="16" r="1.300" fill="#e6e6e8"/><circle cx="20" cy="16" r="1.300" fill="#e6e6e8"/><path d="M26 17.6V24H19.6z" fill="#a6a6aa"/></g><g transform="translate(1538 594)"><path d="M2 9L8 6L12 8V16L4 20z" fill="#77777b"/><path d="M12 6L18 3L22 6V14L14 17z" fill="#8a8a8e"/><circle cx="12.5" cy="12" r="3.4" fill="none" stroke="#e6e6e8" stroke-width="1.2"/><path d="M7 16.5L19 8.5" stroke="#e6e6e8" stroke-width="1.1"/></g><g transform="translate(1538 642)"><path d="M8.5 2.5H15.5L16.5 5.5H7.5z" fill="#b0b0b4"/><rect x="3" y="6.2" width="18" height="3.1" rx="1.4" fill="url(#gL)"/><rect x="3" y="10.1" width="18" height="3.1" rx="1.4" fill="url(#gL)"/><rect x="3" y="14.0" width="18" height="3.1" rx="1.4" fill="url(#gL)"/><rect x="3" y="17.9" width="18" height="3.1" rx="1.4" fill="url(#gL)"/><path d="M12 5V21.5" stroke="#252528" stroke-width="1.2"/></g></svg><div class="abs" style="left:881px;top:73px;width:32px;height:156px;background:#505052;border-radius:9px"></div><svg style="left:0px;top:0px;" width="1920" height="1080" viewBox="0 0 1920 1080"><path d="M886.600 98.600L902 86.200Q904.600 85.200 904.200 87.800L889.800 98.200z" fill="#e4e4e8"/><path d="M901 88.500L903 87" stroke="#505052" stroke-width="0.800"/><path d="M902.5 87Q905.5 88 905.5 91Q905.5 94 908 95" fill="none" stroke="#3a9cf0" stroke-width="1.2"/><path d="M6 0Q10 3 14 0L20 4L17.5 8.5L15 7.2V17H5V7.2L2.5 8.5L0 4Z" transform="translate(888 115) scale(0.9 0.9)" fill="url(#vW)"/><circle cx="897" cy="153" r="8.2" fill="#e4e4ea"/><text x="897" y="158.5" font-family="'Liberation Serif',serif" font-style="italic" font-weight="700" font-size="16" text-anchor="middle" fill="#1a6cf0">i</text><g transform="translate(889 175.5)"><path d="M0.5 5L5 4L7 13.5Q4 14.5 2.5 13z" fill="#c8c8cc"/><ellipse cx="7.5" cy="13" rx="5" ry="1.8" fill="#8a8a8e"/><path d="M5 2.5Q10 -0.5 15.5 1.5Q14 7 13.5 12.5Q9 10.5 3.5 12Q5 7 5 2.5z" fill="url(#vB)"/></g><path d="M6 0Q10 3 14 0L20 4L17.5 8.5L15 7.2V17H5V7.2L2.5 8.5L0 4Z" transform="translate(888 205) scale(0.9 0.9)" fill="url(#vW)"/><rect x="888.500" y="215.500" width="5" height="4.600" fill="#2a7cf0"/><rect x="890.300" y="217" width="1.400" height="1.800" fill="#e8f0ff"/><path d="M889.6 215.5V214Q889.6 212.4 891 212.4Q892.4 212.4 892.4 214V215.5" fill="none" stroke="#2a7cf0" stroke-width="1"/></svg>
<!-- sec_right -->
<div class="abs" style="left:1574px;top:43px;width:340px;height:20px;background:#1e1e21;"></div><div class="abs" style="left:1574px;top:63px;width:340px;height:408.5px;background:#252528;"></div><svg style="left:1578px;top:48.5px;" width="12" height="9" viewBox="0 0 12 9"><path d="M0.5 4.5H8M5 1L8.5 4.5L5 8" fill="none" stroke="#f0f0f0" stroke-width="1.6"/><path d="M11.5 0V9" stroke="#5a5a5e" stroke-width="1"/></svg><div class="t" style="left:1727px;top:49px;font-size:12.4px;color:#ececee;transform:scaleX(0.9648);transform-origin:0 0;">물체창</div><svg style="left:1900px;top:48px;" width="10" height="9" viewBox="0 0 10 9"><rect x="2.8" y="0.6" width="6.6" height="5.2" rx="1" fill="none" stroke="#d8d8d8" stroke-width="1.2"/><path d="M2.8 2.8H1.6Q0.6 2.8 0.6 3.8V7.4Q0.6 8.4 1.6 8.4H6.2Q7.2 8.4 7.2 7.4V5.8" fill="none" stroke="#8c8c90" stroke-width="1.2"/></svg><div class="abs" style="left:1574px;top:91px;width:309px;height:2px;background:#38383b;"></div><div class="abs" style="left:1883px;top:63px;width:31px;height:30px;background:#2a2a2d;"></div><div class="abs" style="left:1702px;top:91px;width:34px;height:2.4px;background:#58a9f2;"></div><svg style="left:1887px;top:74px;" width="6" height="7" viewBox="0 0 6 7"><path d="M5.4 0L0 3.3L5.4 6.6z" fill="#e8e8e8"/></svg><svg style="left:1904px;top:74px;" width="6" height="7" viewBox="0 0 6 7"><path d="M0 0L5.4 3.3L0 6.6z" fill="#e8e8e8"/></svg><svg style="left:0px;top:0px;" width="1920" height="1080" viewBox="0 0 1920 1080"><defs><pattern id="chk2" width="6.4" height="6.4" patternUnits="userSpaceOnUse" x="1616" y="67"><rect width="6.4" height="6.4" fill="#f4f4f4"/><rect x="3.2" width="3.2" height="3.2" fill="#151517"/><rect y="3.2" width="3.2" height="3.2" fill="#151517"/></pattern></defs><g transform="translate(1584 67)"><path d="M1 5L6 4L8 14Q4.5 15 3 13.5z" fill="#9a9a9e"/><ellipse cx="8.5" cy="13.6" rx="5" ry="1.7" fill="#6a6a6e"/><path d="M5.5 2.5Q10.5 -0.5 16 1.5Q14.5 7 14 13Q9.5 11 4 12.5Q5.5 7 5.500 2.5z" fill="#f2f2f2"/></g><rect x="1616" y="67" width="16" height="16" fill="url(#chk2)" stroke="#f2f2f2" stroke-width="0.8"/><circle cx="1656" cy="75" r="8" fill="#f2f2f2"/><g fill="#252528"><circle cx="1653.2" cy="72.2" r="1.4"/><circle cx="1658.8" cy="72.2" r="1.4"/><circle cx="1653.2" cy="77.8" r="1.4"/><circle cx="1658.8" cy="77.8" r="1.4"/></g><circle cx="1682.5" cy="75" r="2.4" fill="#f2f2f2"/><rect x="1682" y="74" width="14" height="2.2" fill="#f2f2f2"/><path d="M1712.5 82L1728 67.5" stroke="#58a9f2" stroke-width="2" stroke-dasharray="4.4 2.8"/><path d="M1744.5 76.5Q1745 83 1747.5 80L1748.5 71.5Q1750.5 69 1751 75L1750.5 78Q1752 81 1753.500 77L1754.500 69.5Q1756.500 67 1757 72.5L1756.500 75Q1758 77 1759.500 72" fill="none" stroke="#f2f2f2" stroke-width="1.5" stroke-linecap="round"/><g transform="translate(1775 67)"><path d="M1 1L7.5 4V9L1 12z" fill="#f2f2f2"/><path d="M16 1L9.5 4V9L16 12z" fill="#f2f2f2"/><rect x="7.2" y="3.5" width="2.600" height="6" fill="#f2f2f2"/><path d="M6.5 10L3 16L5.5 15.5L7.5 11.5zM10.5 10L14 16L11.5 15.5L9.5 11.5z" fill="#b0b0b4"/><path d="M3 5L5 6.500L3 8M14 5L12 6.500L14 8" stroke="#252528" stroke-width="0.800" fill="none"/></g><g transform="translate(1809 66)"><path d="M2 2.500Q6.500 -1 11 2.500V10Q6.500 12.500 2 10z" fill="none" stroke="#f2f2f2" stroke-width="1.500"/><rect x="5" y="2.500" width="3" height="7.500" rx="1.400" fill="#f2f2f2"/><rect x="3.600" y="11" width="5.800" height="6.500" rx="1.400" fill="none" stroke="#f2f2f2" stroke-width="1.600"/></g><g transform="translate(1838 66)"><path d="M1 8L6 4.500H9V17.500H1z" fill="#f2f2f2"/><path d="M10 6Q12 3 10.500 1.500L15.500 0.500Q17.500 4 15 8Q14 12 16.500 17.500H11Q9.500 12 10 6z" fill="none" stroke="#f2f2f2" stroke-width="1.300"/><path d="M5 5.500L9 2.500" stroke="#f2f2f2" stroke-width="1.200"/></g><rect x="1872" y="69" width="11" height="8.500" fill="#f2f2f2"/><path d="M1874 69v4.500M1876 69v4.500M1878 69v4.500M1880 69v4.500M1882 69v4.500" stroke="#252528" stroke-width="0.700"/></svg><svg style="left:1734px;top:116.5px;" width="9" height="9" viewBox="0 0 9 9"><path d="M4.5 0V9M0 4.5H9" stroke="#e8e8e8" stroke-width="1.4"/></svg><div class="t" style="left:1749px;top:117px;font-size:13.5px;color:#ececee;transform:scaleX(0.8739);transform-origin:0 0;">Add</div><svg style="left:1792px;top:117px;" width="10" height="9" viewBox="0 0 10 9"><rect x="0.6" y="2" width="6.6" height="6.2" rx="1" fill="none" stroke="#5c5c60" stroke-width="1.2"/><path d="M2.6 2V1.6Q2.6 0.6 3.6 0.6H8.4Q9.4 0.6 9.4 1.6V5.6Q9.4 6.6 8.4 6.6H7.2" fill="none" stroke="#5c5c60" stroke-width="1.2"/></svg><div class="t" style="left:1808px;top:119px;font-size:12.4px;color:#505054;transform:scaleX(0.9205);transform-origin:0 0;">복사</div><svg style="left:1852px;top:117px;" width="10" height="10" viewBox="0 0 10 10"><path d="M0.8 3.2V8.8H6.6V6" fill="none" stroke="#5c5c60" stroke-width="1.4"/><rect x="2.4" y="4.6" width="2.6" height="2.6" fill="#5c5c60"/><path d="M7.2 0V5M4.7 2.5H9.7" stroke="#5c5c60" stroke-width="1.3"/></svg><div class="t" style="left:1868px;top:117px;font-size:13.5px;color:#505054;transform:scaleX(0.8882);transform-origin:0 0;">Assign</div><div class="abs" style="left:1584px;top:141px;width:322px;height:1px;background:#2e2e31;"></div><svg style="left:1592px;top:158px;" width="12" height="10" viewBox="0 0 12 10"><path d="M1 5L4.2 8.2L10.6 1.2" fill="none" stroke="#58a9f2" stroke-width="1.9"/></svg><svg style="left:1609px;top:163px;" width="36" height="2" viewBox="0 0 36 2"><path d="M0 1H36" stroke="#5a5a5e" stroke-width="1" stroke-dasharray="3.2 1.4"/></svg><div class="t" style="left:1654px;top:159px;font-size:13.5px;color:#ececee;transform:scaleX(0.9642);transform-origin:0 0;">Default Topstitch</div><div class="abs" style="left:1591px;top:182.5px;width:305px;height:1px;background:#2e2e31;"></div><svg style="left:0px;top:0px;" width="1920" height="1080" viewBox="0 0 1920 1080"><g transform="translate(1593.200 122.600) scale(0.620) translate(-1645.300 -24.300)" fill="none" stroke-width="2.200" stroke-linecap="round"><path d="M1641.900 27V18.400A3.150 3.150 0 0 1 1648.200 18.400V20.200" stroke="#1fe09a"/><path d="M1644.700 22L1652.600 26.200A3.300 3.300 0 0 1 1650 32Q1648.500 32 1647.500 31" stroke="#2f9af5"/><path d="M1638.800 24.600A3.700 3.700 0 1 0 1641 32L1647.500 26.600" stroke="#2f9af5"/></g></svg><div class="abs" style="left:1574px;top:477px;width:340px;height:20px;background:#1e1e21;"></div><div class="abs" style="left:1574px;top:497px;width:340px;height:509px;background:#252528;"></div><svg style="left:1578px;top:482.5px;" width="12" height="9" viewBox="0 0 12 9"><path d="M0.5 4.5H8M5 1L8.5 4.5L5 8" fill="none" stroke="#f0f0f0" stroke-width="1.6"/><path d="M11.5 0V9" stroke="#5a5a5e" stroke-width="1"/></svg><div class="t" style="left:1727px;top:483px;font-size:12.4px;color:#ececee;transform:scaleX(0.9648);transform-origin:0 0;">속성창</div><svg style="left:1900px;top:482px;" width="10" height="9" viewBox="0 0 10 9"><rect x="2.8" y="0.6" width="6.6" height="5.2" rx="1" fill="none" stroke="#d8d8d8" stroke-width="1.2"/><path d="M2.8 2.8H1.6Q0.6 2.8 0.6 3.8V7.4Q0.6 8.4 1.6 8.4H6.2Q7.2 8.4 7.2 7.4V5.8" fill="none" stroke="#8c8c90" stroke-width="1.2"/></svg>
<!-- sec_bottom -->
<div class="t" style="left:16px;top:1016px;font-size:12px;color:#d8d8dc;transform:scaleX(0.9038);transform-origin:0 0;">Version: 2025.2.236 (r57278)</div><svg style="left:1811px;top:1016px;" width="14" height="11" viewBox="0 0 14 11"><rect x="0.6" y="0.6" width="12.8" height="9.8" rx="1" fill="#55555a" stroke="#8a8a8e" stroke-width="1"/><path d="M7 0.6V10.4" stroke="#17171a" stroke-width="1.2"/></svg><svg style="left:1834.5px;top:1016px;" width="15" height="11" viewBox="0 0 15 11"><rect x="0" y="0" width="15" height="11" rx="1.6" fill="#e4e4e6"/><text x="7.5" y="8.7" font-family="'Liberation Sans',sans-serif" font-size="8.2" font-weight="700" text-anchor="middle" fill="#17171a">3D</text></svg><svg style="left:1858.5px;top:1016px;" width="15" height="11" viewBox="0 0 15 11"><rect x="0" y="0" width="15" height="11" rx="1.6" fill="#e4e4e6"/><text x="7.5" y="8.7" font-family="'Liberation Sans',sans-serif" font-size="8.2" font-weight="700" text-anchor="middle" fill="#17171a">2D</text></svg><div class="abs" style="left:1879px;top:1011px;width:1px;height:22px;background:#232326;"></div><svg style="left:1886px;top:1015px;" width="13" height="13" viewBox="0 0 13 13"><path d="M11 4A5.2 5.2 0 1 0 11.8 7.8" fill="none" stroke="#e8e8e8" stroke-width="1.5"/><path d="M7.8 4.6H12V0.4" fill="none" stroke="#e8e8e8" stroke-width="1.5"/></svg><div class="abs" style="left:0px;top:1039px;width:1920px;height:41px;background:linear-gradient(90deg,#d4e8f0 0%,#d6e6ef 50%,#dde3ef 85%,#dfe3f0 100%);border-top:1px solid #169ae8"></div><div class="abs" style="left:342.7px;top:1040px;width:48px;height:40px;background:#ecf3f8;"></div><div class="abs" style="left:151px;top:1078px;width:39.6px;height:2px;background:#0f6cd4;"></div><div class="abs" style="left:342.7px;top:1078px;width:48px;height:2px;background:#0f6cd4;"></div><svg style="left:0px;top:0px;" width="1920" height="1080" viewBox="0 0 1920 1080"><defs><linearGradient id="edg" x1="0" y1="0" x2="1" y2="1"><stop offset="0" stop-color="#37c6d0"/><stop offset="0.5" stop-color="#1b9de2"/><stop offset="1" stop-color="#0c59a4"/></linearGradient><linearGradient id="edg2" x1="0" y1="1" x2="1" y2="0"><stop offset="0" stop-color="#1fa5dc"/><stop offset="0.55" stop-color="#35c1a6"/><stop offset="1" stop-color="#7ad84a"/></linearGradient><linearGradient id="npd" x1="0" y1="0" x2="1" y2="1"><stop offset="0" stop-color="#c8ecf4"/><stop offset="0.6" stop-color="#6cc0d8"/><stop offset="1" stop-color="#a8dce8"/></linearGradient><linearGradient id="fld" x1="0" y1="0" x2="0" y2="1"><stop offset="0" stop-color="#ffd766"/><stop offset="1" stop-color="#f8c234"/></linearGradient><linearGradient id="clo" x1="0" y1="0" x2="0" y2="1"><stop offset="0" stop-color="#2ea3f8"/><stop offset="1" stop-color="#1a72e0"/></linearGradient></defs><path d="M15.600 1054L22.800 1053V1059.500H15.600zM23.800 1052.850L32.300 1051.600V1059.500H23.800zM15.600 1060.500H22.800V1067L15.600 1066zM23.800 1060.500H32.300V1068.300L23.800 1067.150z" fill="#000"/><circle cx="73.200" cy="1058" r="8.300" fill="none" stroke="#000" stroke-width="2.300"/><path d="M67.300 1064.200L61.800 1069.200" stroke="#000" stroke-width="2.600" stroke-linecap="round"/><g fill="none" stroke="#000" stroke-width="1.500"><rect x="113.500" y="1055.300" width="10" height="8"/><path d="M111.500 1052.300H123.500M111.500 1066.300H123.500"/><path d="M127 1051.600V1054M127 1058V1067"/></g><rect x="125.800" y="1054.800" width="2.400" height="2.600" fill="#000"/><circle cx="170.800" cy="1059.300" r="12.300" fill="url(#edg)"/><path d="M158.600 1058Q160 1047.200 171 1047Q182.500 1047.500 183.100 1058.500Q182.500 1063 177.500 1063.500Q173.500 1063.500 174 1060Q175.500 1056 171 1054.500Q163 1053.500 158.600 1058z" fill="url(#edg2)"/><path d="M163.500 1059Q164 1067 171.500 1070.500Q177 1071.300 181.500 1066.500Q175 1069 171 1065Q168.500 1062 170.500 1058.500Q167 1056.500 163.500 1059z" fill="#0b4a94"/><path d="M172 1058.200Q177.500 1058.500 176.800 1062.500Q174.500 1063.500 172.800 1062Q171.500 1060 172 1058.200z" fill="#d8ecf4"/><path d="M213 1051.500L229 1050L230.500 1067L224 1070L208 1066.500z" fill="url(#npd)"/><path d="M229 1050L230.500 1067L224 1070z" fill="#d8c8a0"/><path d="M224 1070L230.500 1067L226 1066z" fill="#f4f0e4"/><path d="M213.500 1051.200L229 1049.700" stroke="#8a8a8a" stroke-width="1.600" stroke-dasharray="1 1"/><path d="M258 1052.500Q258 1051.400 259.200 1051.400H266L268 1053.500H258z" fill="#e8a928"/><rect x="258" y="1053.300" width="21.600" height="15" rx="1" fill="url(#fld)"/><path d="M262.500 1068.300V1061.800Q262.500 1060.800 263.500 1060.800H274Q275 1060.800 275 1061.800V1068.300H271.500V1064.300H266V1068.300z" fill="#3a8ee6"/><rect x="308.800" y="1048.600" width="18" height="22.800" rx="1" fill="#484a4e"/><rect x="311" y="1051" width="13.600" height="4" fill="#d5e6ee"/><path d="M311.6 1058.6h3.200l-0.800 2.600h-3.200z" fill="#d5e6ee"/><path d="M316.4 1058.6h3.200l-0.800 2.600h-3.200z" fill="#d5e6ee"/><path d="M321.2 1058.6h3.200l-0.800 2.600h-3.200z" fill="#d5e6ee"/><path d="M311.6 1062.7h3.200l-0.800 2.600h-3.200z" fill="#d5e6ee"/><path d="M316.4 1062.7h3.200l-0.800 2.600h-3.200z" fill="#d5e6ee"/><path d="M321.2 1062.7h3.200l-0.800 2.600h-3.200z" fill="#d5e6ee"/><path d="M311.6 1066.8h3.200l-0.800 2.600h-3.200z" fill="#d5e6ee"/><path d="M316.4 1066.8h3.200l-0.800 2.600h-3.200z" fill="#d5e6ee"/><path d="M321.2 1066.8h3.200l-0.800 2.600h-3.200z" fill="#d5e6ee"/><path d="M366.700 1047.300L377.100 1053.300V1065.300L366.700 1071.300L356.300 1065.300V1053.300z" fill="url(#clo)"/><path d="M371.600 1054.900A6.400 6.400 0 1 0 371.600 1063.700" fill="none" stroke="#fff" stroke-width="2.800" stroke-dasharray="4.600 1"/><path d="M1656.800 1051.800L1664.300 1054.200V1059Q1664.300 1064.500 1656.800 1067.200Q1649.300 1064.500 1649.300 1059V1054.200z" fill="#fff" stroke="#000" stroke-width="1.400"/><path d="M1656.800 1052V1067M1649.500 1059H1664" stroke="#000" stroke-width="1.400"/><path d="M1649.800 1054.500L1656.800 1052.300V1059H1649.800zM1656.800 1059H1664Q1663.500 1064.300 1656.800 1066.700z" fill="#fff"/><path d="M1656.800 1052V1067M1649.500 1059H1664" stroke="#000" stroke-width="1.300"/><circle cx="1661" cy="1064.400" r="3.800" fill="#189a48"/><path d="M1659.100 1064.400L1660.500 1065.800L1663 1063" fill="none" stroke="#fff" stroke-width="1.100"/><g fill="none" stroke="#1a1a1a" stroke-width="1.300"><path d="M1677 1066Q1678 1056.500 1688 1055.200"/><path d="M1680.200 1066Q1681 1059.500 1688.200 1058.400"/><path d="M1683.400 1066Q1684 1062.400 1688.400 1061.600"/></g><circle cx="1687" cy="1065.200" r="1.500" fill="#1a1a1a"/><rect x="1697.300" y="1052" width="15.700" height="15.700" fill="#111"/><path d="M1699.800 1060Q1703 1055.800 1707.500 1056.200V1057.800Q1704 1057.600 1702 1060Q1704 1062.600 1707.500 1062.400V1064Q1703 1064.400 1699.800 1060z" fill="#76b900"/><path d="M1704 1060Q1705.500 1058.400 1707.500 1058.800V1056.200H1711V1064H1707.500V1061.400Q1705.500 1061.600 1704 1060z" fill="#76b900"/><circle cx="1706.600" cy="1060" r="1" fill="#111"/><path d="M1721.200 1057.300H1724L1728.200 1053.300V1066.700L1724 1062.700H1721.200z" fill="none" stroke="#1a1a1a" stroke-width="1.300" stroke-linejoin="round"/><path d="M1730.400 1057.400L1735.400 1062.400M1735.400 1057.400L1730.400 1062.400" stroke="#1a1a1a" stroke-width="1.300"/><path d="M1747.500 1054.500L1754 1052.800Q1760.500 1058 1760 1065.500L1752 1066.500Q1748 1061 1747.500 1054.500z" fill="#141414"/><ellipse cx="1750.300" cy="1061.500" rx="3.600" ry="5" fill="#b8b8b8" transform="rotate(-25 1750.300 1061.500)"/><ellipse cx="1750.600" cy="1062" rx="1.800" ry="2.600" fill="#606060" transform="rotate(-25 1750.600 1062)"/><circle cx="1748.300" cy="1065" r="1.800" fill="#d8d8d8" stroke="#777" stroke-width="0.600"/><circle cx="1776" cy="1060.200" r="7.600" fill="#e4e8f2" stroke="#8e8e92" stroke-width="1.300"/><path d="M1772.600 1056.800L1779.400 1063.600M1779.400 1056.800L1772.600 1063.600" stroke="#a2a2a6" stroke-width="2.400"/><path d="M1880 1053H1894.400V1064.400H1889.600L1887.200 1066.900L1884.800 1064.400H1880z" fill="none" stroke="#1a1a1a" stroke-width="1.300"/><path d="M1915.800 1039V1080" stroke="#a8acb8" stroke-width="1"/></svg><div class="t" style="left:1801px;top:1045px;font-size:12.4px;color:#111;transform:scaleX(1.0326);transform-origin:0 0;">오후 4:17</div><div class="t" style="left:1794px;top:1063px;font-size:12px;color:#111;transform:scaleX(1.0751);transform-origin:0 0;">2025-12-19</div></body>
</html>
